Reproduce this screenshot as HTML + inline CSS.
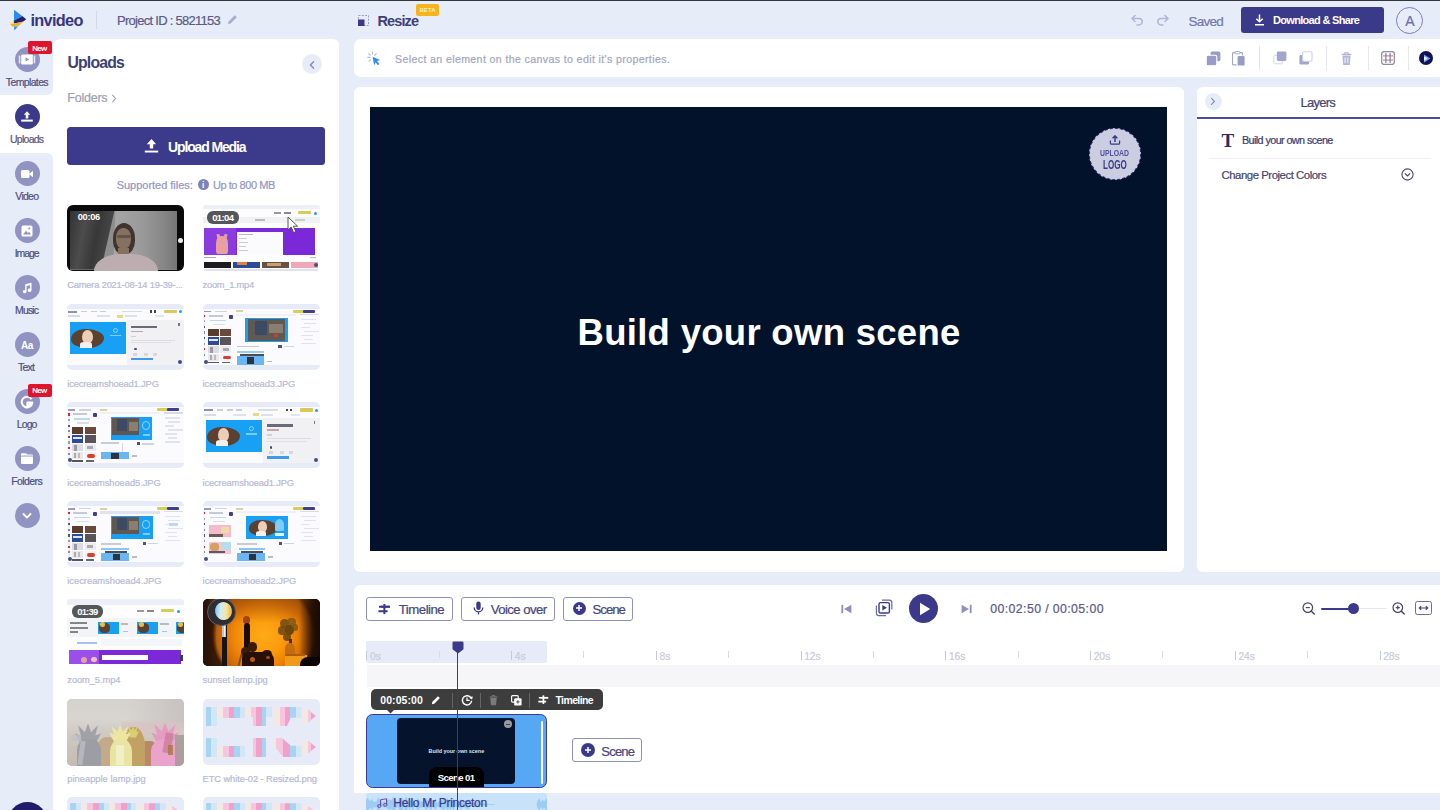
<!DOCTYPE html>
<html><head><meta charset="utf-8">
<style>
*{box-sizing:border-box;margin:0;padding:0}
html,body{width:1440px;height:810px;overflow:hidden}
body{background:#e7edf8;font-family:"Liberation Sans",sans-serif;position:relative;color:#3b3b6d}
.a{position:absolute}
.t{position:absolute;white-space:nowrap;line-height:1}
</style></head><body>
<!-- header -->
<div class="a" style="left:0px;top:0px;width:1440px;height:1.2px;background:#34343c;"></div>
<svg class="a" style="left:9px;top:8px;" width="18" height="24" viewBox="0 0 18 24"><polygon points="5,1.7 13.8,8.4 5,12.6" fill="#2a8cf4"/>
<polygon points="4.6,12.8 13.6,8.2 17.2,11.2 14,13.8 5,15.6" fill="#25206a"/>
<polygon points="0.8,14.6 5,13.4 5,17.6 1,17" fill="#f1e08a"/>
<polygon points="1.4,16.6 14.2,13.6 9,18.6 3.4,18.4" fill="#eab02c"/>
<polygon points="5,18.4 8.8,18.8 5.3,22.6" fill="#2f8df0"/></svg>
<div class="t" style="left:30.40px;top:12.15px;font-size:16.3px;color:#37367f;letter-spacing:-0.653px;font-weight:bold;">invideo</div>
<div class="a" style="left:96px;top:11px;width:1px;height:18px;background:#d3d8e8;"></div>
<div class="t" style="left:117.00px;top:14.30px;font-size:13px;color:#5b5b86;letter-spacing:-0.721px;-webkit-text-stroke:0.22px;">Project ID : 5821153</div>
<svg class="a" style="left:227px;top:14px;" width="11" height="11" viewBox="0 0 11 11"><path d="M1 10 L1.6 7.4 L7.8 1.2 L9.8 3.2 L3.6 9.4 Z" fill="#a9acd0"/></svg>
<svg class="a" style="left:358px;top:14.5px;" width="11" height="11" viewBox="0 0 11 11"><rect x="0.5" y="0.5" width="10" height="10" fill="none" stroke="#9a9dc6" stroke-width="1" stroke-dasharray="2 1.3"/><rect x="0" y="4.5" width="6.5" height="6.5" fill="#3b3a8a"/></svg>
<div class="t" style="left:377.50px;top:14.05px;font-size:14.5px;color:#3f3f76;letter-spacing:-0.899px;font-weight:bold;">Resize</div>
<div class="a" style="left:416px;top:3.5px;width:23px;height:12px;background:#f5b31d;border-radius:2px;"></div>
<div class="t" style="left:419.50px;top:7.30px;font-size:6px;color:#fdeebd;letter-spacing:0.032px;font-weight:bold;">BETA</div>
<svg class="a" style="left:1131px;top:14px;fill:none;stroke:#b1b5d6;stroke-width:1.5;stroke-linecap:round;stroke-linejoin:round" width="13" height="13" viewBox="0 0 13 13"><path d="M4 1.5 L1 4.5 L4 7.5"/><path d="M1.5 4.5 H8 a3.2 3.2 0 0 1 0 6.4 H6"/></svg>
<svg class="a" style="left:1156px;top:14px;fill:none;stroke:#b1b5d6;stroke-width:1.5;stroke-linecap:round;stroke-linejoin:round" width="13" height="13" viewBox="0 0 13 13"><path d="M9 1.5 L12 4.5 L9 7.5"/><path d="M11.5 4.5 H5 a3.2 3.2 0 0 0 0 6.4 H7"/></svg>
<div class="t" style="left:1188.50px;top:15.05px;font-size:13.5px;color:#7477ad;letter-spacing:-0.729px;-webkit-text-stroke:0.22px;">Saved</div>
<div class="a" style="left:1241px;top:7px;width:143px;height:26px;background:#3b3a8a;border-radius:3px;"></div>
<svg class="a" style="left:1254px;top:14px;fill:none;stroke:#fff;stroke-width:1.5" width="11" height="12" viewBox="0 0 11 12"><path d="M5.5 0.5 V7.5 M2.3 4.8 L5.5 7.8 L8.7 4.8 M1 10.8 H10"/></svg>
<div class="t" style="left:1273.00px;top:14.80px;font-size:11px;color:#fff;letter-spacing:-0.689px;font-weight:bold;">Download &amp; Share</div>
<div class="a" style="left:1396.3px;top:7.2px;width:27px;height:27px;background:transparent;border-radius:14px;border:1.3px solid #7b7db5;"></div>
<div class="t" style="left:1405.20px;top:14.30px;font-size:14px;color:#6a6ca8;letter-spacing:0.000px;-webkit-text-stroke:0.22px;">A</div>
<!-- sidebar -->
<div class="a" style="left:0px;top:85px;width:60px;height:80px;background:#fff;"></div>
<div class="a" style="left:0px;top:39px;width:53px;height:56px;background:#e7edf8;border-radius:0 0 6px 0;"></div>
<div class="a" style="left:0px;top:153px;width:53px;height:660px;background:#e7edf8;border-radius:0 6px 0 0;"></div>
<div class="a" style="left:14.5px;top:47.0px;width:25px;height:25px;background:#9193c3;border-radius:13px;"></div>
<svg class="a" style="left:17px;top:52.5px;" width="20" height="14" viewBox="0 0 20 14"><rect x="4.2" y="1.4" width="11.6" height="10" rx="1.2" fill="#fff"/><rect x="1.8" y="2.6" width="1.5" height="7.8" fill="#fff" opacity=".8"/><rect x="16.7" y="2.6" width="1.5" height="7.8" fill="#fff" opacity=".8"/><polygon points="8.6,4.2 8.6,8.6 12.2,6.4" fill="#9193c3"/></svg>
<div class="a" style="left:27.8px;top:41px;width:24px;height:13px;background:#e0142a;border-radius:2px;"></div>
<div class="t" style="left:32.30px;top:44.80px;font-size:8px;color:#fff;letter-spacing:-0.780px;font-weight:bold;">New</div>
<div class="t" style="left:5.80px;top:77.05px;font-size:10.5px;color:#4f4f80;letter-spacing:-0.630px;-webkit-text-stroke:0.22px;">Templates</div>
<div class="a" style="left:14.5px;top:104.05px;width:25px;height:25px;background:#3b3a8a;border-radius:13px;"></div>
<svg class="a" style="left:20px;top:108.55px;" width="14" height="16" viewBox="0 0 14 16"><path d="M7 2.2 L10.2 5.8 H8.3 V9.4 H5.7 V5.8 H3.8 Z" fill="#fff"/><rect x="1.2" y="10.6" width="11.6" height="2" fill="#fff"/></svg>
<div class="t" style="left:10.00px;top:134.05px;font-size:10.5px;color:#5a567c;letter-spacing:-0.742px;-webkit-text-stroke:0.22px;">Uploads</div>
<div class="a" style="left:14.5px;top:161.1px;width:25px;height:25px;background:#9193c3;border-radius:13px;"></div>
<svg class="a" style="left:20px;top:167.6px;" width="14" height="12" viewBox="0 0 14 12"><rect x="1" y="2" width="8.5" height="8" rx="1.5" fill="#fff"/><polygon points="9,6 13,2.8 13,9.2" fill="#fff"/></svg>
<div class="t" style="left:15.30px;top:191.05px;font-size:10.5px;color:#4f4f80;letter-spacing:-0.726px;-webkit-text-stroke:0.22px;">Video</div>
<div class="a" style="left:14.5px;top:218.14999999999998px;width:25px;height:25px;background:#9193c3;border-radius:13px;"></div>
<svg class="a" style="left:21px;top:224.64999999999998px;" width="12" height="12" viewBox="0 0 12 12"><rect x="0.5" y="0.5" width="11" height="11" rx="1.5" fill="#fff"/><polygon points="2,9.5 5,5.8 7,8 8.2,6.8 10,9.5" fill="#9193c3"/><circle cx="8.3" cy="3.6" r="1" fill="#9193c3"/></svg>
<div class="t" style="left:14.70px;top:248.05px;font-size:10.5px;color:#4f4f80;letter-spacing:-1.085px;-webkit-text-stroke:0.22px;">Image</div>
<div class="a" style="left:14.5px;top:275.2px;width:25px;height:25px;background:#9193c3;border-radius:13px;"></div>
<svg class="a" style="left:21px;top:281.7px;" width="12" height="12" viewBox="0 0 12 12"><path d="M4.2 2.2 L10.5 0.8 V8.2 a1.9 1.7 0 1 1 -1.4 -1.6 V3.2 L5.6 4 V9.6 a1.9 1.7 0 1 1 -1.4 -1.6 Z" fill="#fff"/></svg>
<div class="t" style="left:15.10px;top:305.05px;font-size:10.5px;color:#4f4f80;letter-spacing:-0.871px;-webkit-text-stroke:0.22px;">Music</div>
<div class="a" style="left:14.5px;top:332.25px;width:25px;height:25px;background:#9193c3;border-radius:13px;"></div>
<div class="t" style="left:21.00px;top:340.80px;font-size:10px;color:#fff;letter-spacing:-0.522px;font-weight:bold;">Aa</div>
<div class="t" style="left:18.00px;top:362.05px;font-size:10.5px;color:#4f4f80;letter-spacing:-0.816px;-webkit-text-stroke:0.22px;">Text</div>
<div class="a" style="left:14.5px;top:389.29999999999995px;width:25px;height:25px;background:#9193c3;border-radius:13px;"></div>
<svg class="a" style="left:20px;top:394.79999999999995px;" width="14" height="14" viewBox="0 0 14 14"><path d="M11.5 4.2 A5.3 5.3 0 1 0 12.3 7.6 H7.4 V12 L12.3 7.6" fill="none" stroke="#fff" stroke-width="2.1" stroke-linejoin="round"/></svg>
<div class="a" style="left:27.8px;top:383.5px;width:24px;height:13px;background:#e0142a;border-radius:2px;"></div>
<div class="t" style="left:32.30px;top:386.80px;font-size:8px;color:#fff;letter-spacing:-0.780px;font-weight:bold;">New</div>
<div class="t" style="left:16.80px;top:419.05px;font-size:10.5px;color:#4f4f80;letter-spacing:-0.902px;-webkit-text-stroke:0.22px;">Logo</div>
<div class="a" style="left:14.5px;top:446.34999999999997px;width:25px;height:25px;background:#9193c3;border-radius:13px;"></div>
<svg class="a" style="left:20px;top:451.84999999999997px;" width="14" height="13" viewBox="0 0 14 13"><path d="M1 2.2 a1 1 0 0 1 1 -1 H6 L7.3 2.6 H12 a1 1 0 0 1 1 1 V11 a1 1 0 0 1 -1 1 H2 a1 1 0 0 1 -1 -1 Z" fill="#fff"/><rect x="1" y="3.6" width="12" height="0.9" fill="#9193c3"/></svg>
<div class="t" style="left:11.30px;top:476.05px;font-size:10.5px;color:#4f4f80;letter-spacing:-0.602px;-webkit-text-stroke:0.22px;">Folders</div>
<div class="a" style="left:14.5px;top:503.4px;width:25px;height:25px;background:#9193c3;border-radius:13px;"></div>
<svg class="a" style="left:21px;top:510.9px;" width="12" height="10" viewBox="0 0 12 10"><path d="M2.5 3 L6 6.6 L9.5 3" fill="none" stroke="#fff" stroke-width="1.9" stroke-linecap="round" stroke-linejoin="round"/></svg>
<div class="a" style="left:7.9px;top:801.8px;width:39.4px;height:39.4px;background:#1f1c6c;border-radius:20px;"></div>
<!-- panel -->
<div class="a" style="left:53px;top:38.7px;width:286px;height:780px;background:#fff;border-radius:8px 6px 0 0;"></div>
<div class="t" style="left:67.50px;top:54.90px;font-size:15.8px;color:#3f3f74;letter-spacing:-0.849px;font-weight:bold;">Uploads</div>
<div class="a" style="left:302px;top:54px;width:20px;height:20px;background:#e7edf8;border-radius:10px;"></div>
<svg class="a" style="left:308px;top:59.5px;" width="8" height="10" viewBox="0 0 8 10"><path d="M5.6 1.8 L2.4 5 L5.6 8.2" fill="none" stroke="#8a8db8" stroke-width="1.5" stroke-linecap="round" stroke-linejoin="round"/></svg>
<div class="t" style="left:67.30px;top:92.05px;font-size:12.5px;color:#9d9fb2;letter-spacing:-0.228px;-webkit-text-stroke:0.22px;">Folders</div>
<svg class="a" style="left:110.5px;top:94px;" width="6" height="9" viewBox="0 0 6 9"><path d="M1.5 1.2 L4.6 4.5 L1.5 7.8" fill="none" stroke="#a6a8ba" stroke-width="1.1" stroke-linecap="round" stroke-linejoin="round"/></svg>
<div class="a" style="left:67px;top:127.3px;width:258px;height:37.6px;background:#3c3a8b;border-radius:3.5px;"></div>
<svg class="a" style="left:144px;top:138px;" width="15" height="16" viewBox="0 0 15 16"><path d="M7.5 1 L12.2 6.3 H9.2 V10.4 H5.8 V6.3 H2.8 Z" fill="#fff"/><rect x="0.8" y="12.6" width="13.4" height="1.9" fill="#fff"/></svg>
<div class="t" style="left:168.00px;top:140.30px;font-size:14px;color:#fff;letter-spacing:-1.131px;font-weight:bold;">Upload Media</div>
<div class="t" style="left:116.70px;top:179.80px;font-size:11px;color:#9496c4;letter-spacing:-0.022px;-webkit-text-stroke:0.22px;">Supported files:</div>
<div class="a" style="left:197.5px;top:179px;width:11px;height:11px;background:#7f81b8;border-radius:6px;"></div>
<div class="t" style="left:202.10px;top:181.05px;font-size:8.5px;color:#fff;letter-spacing:0.000px;font-weight:bold;">i</div>
<div class="t" style="left:213.00px;top:179.80px;font-size:11px;color:#9496c4;letter-spacing:-0.457px;-webkit-text-stroke:0.22px;">Up to 800 MB</div>
<div class="a" style="left:67px;top:205.0px;width:117px;height:66px;background:#0a0a0a;border-radius:6px;overflow:hidden"><div style="position:absolute;left:0;top:0;right:0;bottom:0;filter:blur(0.55px)"><div class="a" style="left:2.5px;top:5.5px;width:107.5px;height:59px;background:#8e8e8e;"></div><div class="a" style="left:2.5px;top:5.5px;width:45px;height:59px;background:#4a4a4a;background:linear-gradient(100deg,#333 0%,#4c4c4c 30%,#383838 55%,#464646 80%,#6a6a6a 100%);clip-path:polygon(0 0,100% 0,70% 100%,0 100%);"></div><div class="a" style="left:46px;top:5.5px;width:64px;height:59px;background:#a2a2a2;background:linear-gradient(90deg,#a6a6a6,#9a9a9a 45%,#868686 80%,#767676);clip-path:polygon(4% 0,100% 0,100% 100%,0 100%);"></div><div class="a" style="left:45.5px;top:18px;width:22px;height:31px;background:#40342e;border-radius:50% 50% 42% 42%;"></div><div class="a" style="left:49px;top:23px;width:15px;height:21px;background:#86705f;border-radius:45%;"></div><div class="a" style="left:49.5px;top:29.5px;width:14px;height:3.2px;background:#4a3c38;border-radius:2px;opacity:.55;"></div><div class="a" style="left:51px;top:43px;width:11px;height:8px;background:#86705f;"></div><div class="a" style="left:27px;top:49px;width:64px;height:20px;background:#bcaeb0;border-radius:42% 42% 0 0/85% 85% 0 0;"></div><div class="a" style="left:110.8px;top:32.8px;width:5px;height:5px;background:#ececec;border-radius:3px;"></div></div></div>
<div class="a" style="left:202.5px;top:205.0px;width:117px;height:66px;background:#fff;border-radius:3px;overflow:hidden"><div style="position:absolute;left:0;top:0;right:0;bottom:0;filter:blur(0.55px)"><div class="a" style="left:0px;top:0px;width:117px;height:66px;background:#fdfdfe;"></div><div class="a" style="left:0px;top:0px;width:117px;height:4px;background:#eceff7;"></div><div class="a" style="left:71px;top:7px;width:7px;height:1.5px;background:#999;"></div><div class="a" style="left:81px;top:7px;width:7px;height:1.5px;background:#888;"></div><div class="a" style="left:95px;top:6px;width:13px;height:3px;background:#d9cd55;border-radius:1px;"></div><div class="a" style="left:111px;top:6.5px;width:3px;height:3px;background:#18a0f5;border-radius:2px;"></div><div class="a" style="left:0px;top:12px;width:117px;height:6px;background:#f1f1f4;"></div><div class="a" style="left:52px;top:14px;width:10px;height:1.5px;background:#bbb;"></div><div class="a" style="left:92px;top:14px;width:10px;height:1.5px;background:#ccc;"></div><div class="a" style="left:1px;top:23px;width:111px;height:26.5px;background:#7a28d8;"></div><div class="a" style="left:1px;top:23px;width:32px;height:26.5px;background:#8a3ce0;"></div><div class="a" style="left:34px;top:27px;width:46px;height:22.5px;background:#fbfbfd;"></div><div class="a" style="left:36px;top:29px;width:14px;height:1.3px;background:#bbb;"></div><div class="a" style="left:36px;top:33px;width:8px;height:1.2px;background:#ccc;"></div><div class="a" style="left:36px;top:37px;width:9px;height:1.2px;background:#ccc;"></div><div class="a" style="left:36px;top:41px;width:7px;height:1.2px;background:#ccc;"></div><div class="a" style="left:36px;top:45px;width:9px;height:1.2px;background:#ccc;"></div><div class="a" style="left:13px;top:31px;width:12px;height:18px;background:#e8a0a0;border-radius:40% 40% 20% 20%;"></div><div class="a" style="left:14px;top:29px;width:3px;height:5px;background:#e8a0a0;transform:rotate(-15deg);"></div><div class="a" style="left:21px;top:29px;width:3px;height:5px;background:#e8a0a0;transform:rotate(15deg);"></div><div class="a" style="left:1px;top:52px;width:12px;height:1.3px;background:#aaa;"></div><div class="a" style="left:107px;top:52px;width:6px;height:1.3px;background:#bbb;"></div><div class="a" style="left:1px;top:57px;width:27px;height:6px;background:#1c1c1e;"></div><div class="a" style="left:30px;top:57px;width:27px;height:6px;background:#2a4a9a;"></div><div class="a" style="left:34px;top:57px;width:10px;height:3px;background:#e0803a;"></div><div class="a" style="left:59px;top:57px;width:27px;height:6px;background:#6a5040;"></div><div class="a" style="left:64px;top:58px;width:14px;height:3px;background:#c8a070;"></div><div class="a" style="left:88px;top:57px;width:27px;height:6px;background:#f0a8b8;"></div><div class="a" style="left:111px;top:58px;width:4px;height:4px;background:#4a4a86;border-radius:2px;"></div><div class="a" style="left:1px;top:63.5px;width:114px;height:2px;background:#e0e3ee;"></div><svg class="a" style="left:84px;top:11px" width="12" height="18" viewBox="0 0 12 18"><path d="M1 1 L1 14 L4.2 11 L6.6 16.6 L8.8 15.6 L6.4 10.2 L10.6 10.2 Z" fill="#fff" stroke="#444" stroke-width="0.9"/></svg></div></div>
<div class="t" style="left:77.80px;top:212.70px;font-size:9.2px;color:#fff;letter-spacing:-0.297px;font-weight:bold;">00:06</div>
<div class="a" style="left:207px;top:210.5px;width:32px;height:13.5px;background:#55565a;border-radius:6px;"></div>
<div class="t" style="left:212.20px;top:213.05px;font-size:9.5px;color:#fff;letter-spacing:-0.599px;font-weight:bold;">01:04</div>
<div class="a" style="left:67px;top:303.7px;width:117px;height:66px;background:#e6ebf7;border-radius:5px;overflow:hidden"><div style="position:absolute;left:0;top:0;right:0;bottom:0;filter:blur(0.55px)"><div class="a" style="left:0px;top:5px;width:117px;height:56px;background:#fbfbfd;"></div><div class="a" style="left:1px;top:7px;width:9px;height:2px;background:#8f93ad;"></div><div class="a" style="left:14px;top:7px;width:6px;height:1.5px;background:#c9ccda;"></div><div class="a" style="left:24px;top:7px;width:6px;height:1.5px;background:#c9ccda;"></div><div class="a" style="left:33px;top:7px;width:6px;height:1.5px;background:#c9ccda;"></div><div class="a" style="left:55px;top:7px;width:20px;height:1.5px;background:#dadce6;"></div><div class="a" style="left:83px;top:6.5px;width:2px;height:2.5px;background:#444;"></div><div class="a" style="left:87px;top:6.5px;width:2px;height:2.5px;background:#444;"></div><div class="a" style="left:97px;top:6px;width:13px;height:3.5px;background:#d9c95a;border-radius:1px;"></div><div class="a" style="left:112px;top:6.5px;width:3px;height:3px;background:#18a0f5;border-radius:2px;"></div><div class="a" style="left:1px;top:11.5px;width:12px;height:2px;background:#d9dbe5;"></div><div class="a" style="left:30px;top:11.5px;width:13px;height:2px;background:#dfe1ea;"></div><div class="a" style="left:50px;top:11px;width:6px;height:3px;background:#e4dc84;"></div><div class="a" style="left:58px;top:11.5px;width:12px;height:2px;background:#dfe1ea;"></div><div class="a" style="left:88px;top:11.5px;width:9px;height:2px;background:#e3e5ec;"></div><div class="a" style="left:3px;top:18px;width:56px;height:32px;background:#18a0f5;"></div><div class="a" style="left:4px;top:25.0px;width:33.0px;height:19.0px;background:#5d4130;border-radius:45% 55% 50% 50%/55% 50% 55% 45%;"></div><div class="a" style="left:15.0px;top:26.0px;width:11.0px;height:14.0px;background:#eccdb8;border-radius:50%;"></div><div class="a" style="left:13.0px;top:38.0px;width:12.0px;height:6.0px;background:#f3efee;border-radius:40% 40% 0 0;"></div><div class="a" style="left:46px;top:24px;width:5px;height:5px;background:transparent;border-radius:3px;border:1px solid #8fd3fb;"></div><div class="a" style="left:43px;top:31px;width:11px;height:1.2px;background:#7fccfa;"></div><div class="a" style="left:60px;top:16px;width:57px;height:45px;background:#f1f1f4;"></div><div class="a" style="left:64px;top:22px;width:26px;height:2.2px;background:#6a6a78;"></div><div class="a" style="left:64px;top:27px;width:12px;height:1.5px;background:#c4a8a8;"></div><div class="a" style="left:64px;top:32px;width:5px;height:1.3px;background:#d0d0d8;"></div><div class="a" style="left:64px;top:36px;width:44px;height:1px;background:#dcdce2;"></div><div class="a" style="left:64px;top:38.5px;width:40px;height:1px;background:#e0e0e6;"></div><div class="a" style="left:67px;top:44px;width:2.5px;height:2.5px;background:#4a4a7a;border-radius:2px;"></div><div class="a" style="left:66px;top:49px;width:4px;height:3px;background:#d4d4dc;"></div><div class="a" style="left:77px;top:49px;width:4px;height:3px;background:#d8d8dc;"></div><div class="a" style="left:86px;top:49px;width:4px;height:3px;background:#d8d8dc;"></div><div class="a" style="left:64px;top:54px;width:22px;height:2.8px;background:#3e9bea;"></div><div class="a" style="left:111px;top:56px;width:4px;height:4px;background:#4a4a86;border-radius:2px;"></div><div class="a" style="left:111px;top:19px;width:1.5px;height:3px;background:#777;"></div></div></div>
<div class="a" style="left:202.5px;top:303.7px;width:117px;height:66px;background:#e6ebf7;border-radius:5px;overflow:hidden"><div style="position:absolute;left:0;top:0;right:0;bottom:0;filter:blur(0.55px)"><div class="a" style="left:0px;top:5px;width:117px;height:56px;background:#fbfbfd;"></div><div class="a" style="left:1px;top:7px;width:7px;height:1.6px;background:#9a9db8;"></div><div class="a" style="left:12px;top:7px;width:12px;height:1.4px;background:#cfd2e0;"></div><div class="a" style="left:33px;top:6.5px;width:7px;height:2px;background:#d8d4a0;"></div><div class="a" style="left:90px;top:6px;width:11px;height:3px;background:#d9cd55;border-radius:1px;"></div><div class="a" style="left:100px;top:6px;width:12px;height:3px;background:#3e3f8e;border-radius:1px;"></div><div class="a" style="left:1px;top:9.5px;width:1.6px;height:46px;background:#eceef6;"></div><div class="a" style="left:1px;top:11.0px;width:1.6px;height:2.2px;background:#d23;"></div><div class="a" style="left:1px;top:16.6px;width:1.6px;height:2.2px;background:#9aa;"></div><div class="a" style="left:1px;top:22.2px;width:1.6px;height:2.2px;background:#556;"></div><div class="a" style="left:1px;top:27.799999999999997px;width:1.6px;height:2.2px;background:#88a;"></div><div class="a" style="left:1px;top:33.4px;width:1.6px;height:2.2px;background:#557;"></div><div class="a" style="left:1px;top:39.0px;width:1.6px;height:2.2px;background:#99b;"></div><div class="a" style="left:1px;top:44.599999999999994px;width:1.6px;height:2.2px;background:#c33;"></div><div class="a" style="left:1px;top:50.199999999999996px;width:1.6px;height:2.2px;background:#88a;"></div><div class="a" style="left:1.2px;top:56px;width:4px;height:4px;background:#4a4a86;border-radius:2px;"></div><div class="a" style="left:6px;top:11px;width:14px;height:2px;background:#c5c8dc;"></div><div class="a" style="left:26px;top:11px;width:4px;height:4px;background:#3e3f8e;border-radius:1px;"></div><div class="a" style="left:7px;top:16px;width:16px;height:1.3px;background:#b8daf5;"></div><div class="a" style="left:10px;top:20px;width:12px;height:1.2px;background:#dadde8;"></div><div class="a" style="left:5px;top:25px;width:11px;height:7px;background:#5b3c2c;"></div><div class="a" style="left:17.5px;top:25px;width:11px;height:7px;background:#6a4a3c;"></div><div class="a" style="left:5px;top:33px;width:11px;height:8px;background:#2d4a9a;"></div><div class="a" style="left:6px;top:35px;width:9px;height:2px;background:#dfe6f5;"></div><div class="a" style="left:17.5px;top:33px;width:11px;height:8px;background:#5a5458;"></div><div class="a" style="left:5px;top:42px;width:11px;height:7px;background:#dcdde3;"></div><div class="a" style="left:7px;top:43px;width:3px;height:6px;background:#9a9aa0;"></div><div class="a" style="left:17.5px;top:42px;width:11px;height:7px;background:#ececf0;"></div><div class="a" style="left:20px;top:44px;width:6px;height:3px;background:#aaa;"></div><div class="a" style="left:5px;top:50px;width:11px;height:7px;background:#e8e8ee;"></div><div class="a" style="left:7px;top:51px;width:2px;height:5px;background:#aaa;"></div><div class="a" style="left:11px;top:51px;width:2px;height:5px;background:#bbb;"></div><div class="a" style="left:17.5px;top:50px;width:11px;height:7px;background:#f2f2f4;"></div><div class="a" style="left:20px;top:52px;width:8px;height:3.5px;background:#d6402c;border-radius:2px;"></div><div class="a" style="left:5px;top:58px;width:11px;height:1.5px;background:#555;"></div><div class="a" style="left:19px;top:58px;width:8px;height:1.5px;background:#666;"></div><div class="a" style="left:33px;top:10px;width:60px;height:2px;background:#f0f1f6;"></div><div class="a" style="left:42px;top:14px;width:43px;height:24px;background:#18a0f5;"></div><div class="a" style="left:45px;top:15px;width:37px;height:22px;background:#5e5a52;"></div><div class="a" style="left:52px;top:17px;width:12px;height:14px;background:#3d4a66;"></div><div class="a" style="left:66px;top:20px;width:14px;height:9px;background:#8a7e70;"></div><div class="a" style="left:71px;top:30px;width:4px;height:3px;background:#c84030;"></div><div class="a" style="left:34px;top:42px;width:22px;height:1.5px;background:#c5c8d6;"></div><div class="a" style="left:75px;top:41px;width:4px;height:3px;background:#556;"></div><div class="a" style="left:81px;top:42px;width:10px;height:1.2px;background:#d0d3de;"></div><div class="a" style="left:34px;top:47px;width:27px;height:2.3px;background:#9acbf2;"></div><div class="a" style="left:37px;top:50px;width:24px;height:3px;background:#4a4e58;"></div><div class="a" style="left:34px;top:52px;width:27px;height:9px;background:#6ab6f2;"></div><div class="a" style="left:44px;top:53px;width:7px;height:7px;background:#2c3442;"></div><div class="a" style="left:64px;top:57px;width:5px;height:1.5px;background:#bbb;"></div><div class="a" style="left:97px;top:10px;width:19px;height:1.4px;background:#d9dce8;"></div><div class="a" style="left:98px;top:15px;width:15px;height:1.2px;background:#e1e3ee;"></div><div class="a" style="left:101px;top:19px;width:12px;height:1.2px;background:#e1e3ee;"></div><div class="a" style="left:98px;top:23px;width:9px;height:1.2px;background:#e1e3ee;"></div><div class="a" style="left:101px;top:27px;width:15px;height:1.2px;background:#e1e3ee;"></div><div class="a" style="left:98px;top:31px;width:12px;height:1.2px;background:#e1e3ee;"></div><div class="a" style="left:101px;top:35px;width:9px;height:1.2px;background:#e1e3ee;"></div><div class="a" style="left:98px;top:39px;width:15px;height:1.2px;background:#e1e3ee;"></div></div></div>
<div class="a" style="left:67px;top:402.4px;width:117px;height:66px;background:#e6ebf7;border-radius:5px;overflow:hidden"><div style="position:absolute;left:0;top:0;right:0;bottom:0;filter:blur(0.55px)"><div class="a" style="left:0px;top:5px;width:117px;height:56px;background:#fbfbfd;"></div><div class="a" style="left:1px;top:7px;width:7px;height:1.6px;background:#9a9db8;"></div><div class="a" style="left:12px;top:7px;width:12px;height:1.4px;background:#cfd2e0;"></div><div class="a" style="left:33px;top:6.5px;width:7px;height:2px;background:#d8d4a0;"></div><div class="a" style="left:90px;top:6px;width:11px;height:3px;background:#d9cd55;border-radius:1px;"></div><div class="a" style="left:100px;top:6px;width:12px;height:3px;background:#3e3f8e;border-radius:1px;"></div><div class="a" style="left:1px;top:9.5px;width:1.6px;height:46px;background:#eceef6;"></div><div class="a" style="left:1px;top:11.0px;width:1.6px;height:2.2px;background:#d23;"></div><div class="a" style="left:1px;top:16.6px;width:1.6px;height:2.2px;background:#9aa;"></div><div class="a" style="left:1px;top:22.2px;width:1.6px;height:2.2px;background:#556;"></div><div class="a" style="left:1px;top:27.799999999999997px;width:1.6px;height:2.2px;background:#88a;"></div><div class="a" style="left:1px;top:33.4px;width:1.6px;height:2.2px;background:#557;"></div><div class="a" style="left:1px;top:39.0px;width:1.6px;height:2.2px;background:#99b;"></div><div class="a" style="left:1px;top:44.599999999999994px;width:1.6px;height:2.2px;background:#c33;"></div><div class="a" style="left:1px;top:50.199999999999996px;width:1.6px;height:2.2px;background:#88a;"></div><div class="a" style="left:1.2px;top:56px;width:4px;height:4px;background:#4a4a86;border-radius:2px;"></div><div class="a" style="left:6px;top:11px;width:14px;height:2px;background:#c5c8dc;"></div><div class="a" style="left:26px;top:11px;width:4px;height:4px;background:#3e3f8e;border-radius:1px;"></div><div class="a" style="left:7px;top:16px;width:16px;height:1.3px;background:#b8daf5;"></div><div class="a" style="left:10px;top:20px;width:12px;height:1.2px;background:#dadde8;"></div><div class="a" style="left:5px;top:25px;width:11px;height:7px;background:#5b3c2c;"></div><div class="a" style="left:17.5px;top:25px;width:11px;height:7px;background:#6a4a3c;"></div><div class="a" style="left:5px;top:33px;width:11px;height:8px;background:#2d4a9a;"></div><div class="a" style="left:6px;top:35px;width:9px;height:2px;background:#dfe6f5;"></div><div class="a" style="left:17.5px;top:33px;width:11px;height:8px;background:#5a5458;"></div><div class="a" style="left:5px;top:42px;width:11px;height:7px;background:#dcdde3;"></div><div class="a" style="left:7px;top:43px;width:3px;height:6px;background:#9a9aa0;"></div><div class="a" style="left:17.5px;top:42px;width:11px;height:7px;background:#ececf0;"></div><div class="a" style="left:20px;top:44px;width:6px;height:3px;background:#aaa;"></div><div class="a" style="left:5px;top:50px;width:11px;height:7px;background:#e8e8ee;"></div><div class="a" style="left:7px;top:51px;width:2px;height:5px;background:#aaa;"></div><div class="a" style="left:11px;top:51px;width:2px;height:5px;background:#bbb;"></div><div class="a" style="left:17.5px;top:50px;width:11px;height:7px;background:#f2f2f4;"></div><div class="a" style="left:20px;top:52px;width:8px;height:3.5px;background:#d6402c;border-radius:2px;"></div><div class="a" style="left:5px;top:58px;width:11px;height:1.5px;background:#555;"></div><div class="a" style="left:19px;top:58px;width:8px;height:1.5px;background:#666;"></div><div class="a" style="left:33px;top:10px;width:60px;height:2px;background:#f0f1f6;"></div><div class="a" style="left:44px;top:14.5px;width:41px;height:23px;background:#18a0f5;"></div><div class="a" style="left:45px;top:15.5px;width:27px;height:17px;background:#5e5850;"></div><div class="a" style="left:50px;top:16.5px;width:10px;height:12px;background:#3d4a66;"></div><div class="a" style="left:62px;top:19.5px;width:9px;height:9px;background:#8a7e70;"></div><div class="a" style="left:75px;top:18.5px;width:8px;height:9px;background:transparent;border-radius:5px;border:1.2px solid #8fd3fb;"></div><div class="a" style="left:76px;top:31.5px;width:7px;height:2px;background:#7fccfa;"></div><div class="a" style="left:34px;top:40px;width:18px;height:1.5px;background:#c8cbd8;"></div><div class="a" style="left:70px;top:40px;width:3px;height:3px;background:#556;"></div><div class="a" style="left:75px;top:41px;width:12px;height:1.2px;background:#d0d3de;"></div><div class="a" style="left:55px;top:41px;width:1px;height:12px;background:#d5d7e2;"></div><div class="a" style="left:34px;top:50px;width:28px;height:7px;background:#6ab6f2;"></div><div class="a" style="left:44px;top:51px;width:8px;height:6px;background:#2c3442;"></div><div class="a" style="left:65px;top:53px;width:5px;height:1.5px;background:#bbb;"></div><div class="a" style="left:97px;top:10px;width:19px;height:1.4px;background:#d9dce8;"></div><div class="a" style="left:98px;top:15px;width:15px;height:1.2px;background:#e1e3ee;"></div><div class="a" style="left:101px;top:19px;width:12px;height:1.2px;background:#e1e3ee;"></div><div class="a" style="left:98px;top:23px;width:9px;height:1.2px;background:#e1e3ee;"></div><div class="a" style="left:101px;top:27px;width:15px;height:1.2px;background:#e1e3ee;"></div><div class="a" style="left:98px;top:31px;width:12px;height:1.2px;background:#e1e3ee;"></div><div class="a" style="left:101px;top:35px;width:9px;height:1.2px;background:#e1e3ee;"></div><div class="a" style="left:98px;top:39px;width:15px;height:1.2px;background:#e1e3ee;"></div></div></div>
<div class="a" style="left:202.5px;top:402.4px;width:117px;height:66px;background:#e6ebf7;border-radius:5px;overflow:hidden"><div style="position:absolute;left:0;top:0;right:0;bottom:0;filter:blur(0.55px)"><div class="a" style="left:0px;top:5px;width:117px;height:56px;background:#fbfbfd;"></div><div class="a" style="left:1px;top:7px;width:9px;height:2px;background:#8f93ad;"></div><div class="a" style="left:14px;top:7px;width:6px;height:1.5px;background:#c9ccda;"></div><div class="a" style="left:24px;top:7px;width:6px;height:1.5px;background:#c9ccda;"></div><div class="a" style="left:33px;top:7px;width:6px;height:1.5px;background:#c9ccda;"></div><div class="a" style="left:55px;top:7px;width:20px;height:1.5px;background:#dadce6;"></div><div class="a" style="left:83px;top:6.5px;width:2px;height:2.5px;background:#444;"></div><div class="a" style="left:87px;top:6.5px;width:2px;height:2.5px;background:#444;"></div><div class="a" style="left:97px;top:6px;width:13px;height:3.5px;background:#d9c95a;border-radius:1px;"></div><div class="a" style="left:112px;top:6.5px;width:3px;height:3px;background:#18a0f5;border-radius:2px;"></div><div class="a" style="left:1px;top:11.5px;width:12px;height:2px;background:#d9dbe5;"></div><div class="a" style="left:30px;top:11.5px;width:13px;height:2px;background:#dfe1ea;"></div><div class="a" style="left:50px;top:11px;width:6px;height:3px;background:#e4dc84;"></div><div class="a" style="left:58px;top:11.5px;width:12px;height:2px;background:#dfe1ea;"></div><div class="a" style="left:88px;top:11.5px;width:9px;height:2px;background:#e3e5ec;"></div><div class="a" style="left:3px;top:18px;width:56px;height:32px;background:#18a0f5;"></div><div class="a" style="left:4px;top:25.0px;width:33.0px;height:19.0px;background:#5d4130;border-radius:45% 55% 50% 50%/55% 50% 55% 45%;"></div><div class="a" style="left:15.0px;top:26.0px;width:11.0px;height:14.0px;background:#eccdb8;border-radius:50%;"></div><div class="a" style="left:13.0px;top:38.0px;width:12.0px;height:6.0px;background:#f3efee;border-radius:40% 40% 0 0;"></div><div class="a" style="left:46px;top:24px;width:5px;height:5px;background:transparent;border-radius:3px;border:1px solid #8fd3fb;"></div><div class="a" style="left:43px;top:31px;width:11px;height:1.2px;background:#7fccfa;"></div><div class="a" style="left:60px;top:16px;width:57px;height:45px;background:#f1f1f4;"></div><div class="a" style="left:64px;top:22px;width:26px;height:2.2px;background:#6a6a78;"></div><div class="a" style="left:64px;top:27px;width:12px;height:1.5px;background:#c4a8a8;"></div><div class="a" style="left:64px;top:32px;width:5px;height:1.3px;background:#d0d0d8;"></div><div class="a" style="left:64px;top:36px;width:44px;height:1px;background:#dcdce2;"></div><div class="a" style="left:64px;top:38.5px;width:40px;height:1px;background:#e0e0e6;"></div><div class="a" style="left:67px;top:44px;width:2.5px;height:2.5px;background:#4a4a7a;border-radius:2px;"></div><div class="a" style="left:66px;top:49px;width:4px;height:3px;background:#d4d4dc;"></div><div class="a" style="left:77px;top:49px;width:4px;height:3px;background:#d8d8dc;"></div><div class="a" style="left:86px;top:49px;width:4px;height:3px;background:#d8d8dc;"></div><div class="a" style="left:64px;top:54px;width:22px;height:2.8px;background:#3e9bea;"></div><div class="a" style="left:111px;top:56px;width:4px;height:4px;background:#4a4a86;border-radius:2px;"></div><div class="a" style="left:111px;top:19px;width:1.5px;height:3px;background:#777;"></div></div></div>
<div class="a" style="left:67px;top:501.1px;width:117px;height:66px;background:#e6ebf7;border-radius:5px;overflow:hidden"><div style="position:absolute;left:0;top:0;right:0;bottom:0;filter:blur(0.55px)"><div class="a" style="left:0px;top:5px;width:117px;height:56px;background:#fbfbfd;"></div><div class="a" style="left:1px;top:7px;width:7px;height:1.6px;background:#9a9db8;"></div><div class="a" style="left:12px;top:7px;width:12px;height:1.4px;background:#cfd2e0;"></div><div class="a" style="left:33px;top:6.5px;width:7px;height:2px;background:#d8d4a0;"></div><div class="a" style="left:90px;top:6px;width:11px;height:3px;background:#d9cd55;border-radius:1px;"></div><div class="a" style="left:100px;top:6px;width:12px;height:3px;background:#3e3f8e;border-radius:1px;"></div><div class="a" style="left:1px;top:9.5px;width:1.6px;height:46px;background:#eceef6;"></div><div class="a" style="left:1px;top:11.0px;width:1.6px;height:2.2px;background:#d23;"></div><div class="a" style="left:1px;top:16.6px;width:1.6px;height:2.2px;background:#9aa;"></div><div class="a" style="left:1px;top:22.2px;width:1.6px;height:2.2px;background:#556;"></div><div class="a" style="left:1px;top:27.799999999999997px;width:1.6px;height:2.2px;background:#88a;"></div><div class="a" style="left:1px;top:33.4px;width:1.6px;height:2.2px;background:#557;"></div><div class="a" style="left:1px;top:39.0px;width:1.6px;height:2.2px;background:#99b;"></div><div class="a" style="left:1px;top:44.599999999999994px;width:1.6px;height:2.2px;background:#c33;"></div><div class="a" style="left:1px;top:50.199999999999996px;width:1.6px;height:2.2px;background:#88a;"></div><div class="a" style="left:1.2px;top:56px;width:4px;height:4px;background:#4a4a86;border-radius:2px;"></div><div class="a" style="left:6px;top:11px;width:14px;height:2px;background:#c5c8dc;"></div><div class="a" style="left:26px;top:11px;width:4px;height:4px;background:#3e3f8e;border-radius:1px;"></div><div class="a" style="left:7px;top:16px;width:16px;height:1.3px;background:#b8daf5;"></div><div class="a" style="left:10px;top:20px;width:12px;height:1.2px;background:#dadde8;"></div><div class="a" style="left:5px;top:25px;width:11px;height:7px;background:#5b3c2c;"></div><div class="a" style="left:17.5px;top:25px;width:11px;height:7px;background:#6a4a3c;"></div><div class="a" style="left:5px;top:33px;width:11px;height:8px;background:#2d4a9a;"></div><div class="a" style="left:6px;top:35px;width:9px;height:2px;background:#dfe6f5;"></div><div class="a" style="left:17.5px;top:33px;width:11px;height:8px;background:#5a5458;"></div><div class="a" style="left:5px;top:42px;width:11px;height:7px;background:#dcdde3;"></div><div class="a" style="left:7px;top:43px;width:3px;height:6px;background:#9a9aa0;"></div><div class="a" style="left:17.5px;top:42px;width:11px;height:7px;background:#ececf0;"></div><div class="a" style="left:20px;top:44px;width:6px;height:3px;background:#aaa;"></div><div class="a" style="left:5px;top:50px;width:11px;height:7px;background:#e8e8ee;"></div><div class="a" style="left:7px;top:51px;width:2px;height:5px;background:#aaa;"></div><div class="a" style="left:11px;top:51px;width:2px;height:5px;background:#bbb;"></div><div class="a" style="left:17.5px;top:50px;width:11px;height:7px;background:#f2f2f4;"></div><div class="a" style="left:20px;top:52px;width:8px;height:3.5px;background:#d6402c;border-radius:2px;"></div><div class="a" style="left:5px;top:58px;width:11px;height:1.5px;background:#555;"></div><div class="a" style="left:19px;top:58px;width:8px;height:1.5px;background:#666;"></div><div class="a" style="left:33px;top:10px;width:60px;height:2px;background:#f0f1f6;"></div><div class="a" style="left:33px;top:10px;width:60px;height:3px;background:#dfe3f0;"></div><div class="a" style="left:44px;top:15px;width:42px;height:23px;background:#18a0f5;"></div><div class="a" style="left:45px;top:16px;width:27px;height:17px;background:#5e5850;"></div><div class="a" style="left:50px;top:17px;width:10px;height:12px;background:#3d4a66;"></div><div class="a" style="left:62px;top:20px;width:9px;height:9px;background:#8a7e70;"></div><div class="a" style="left:75px;top:19px;width:8px;height:9px;background:transparent;border-radius:5px;border:1.2px solid #8fd3fb;"></div><div class="a" style="left:76px;top:32px;width:7px;height:2px;background:#7fccfa;"></div><div class="a" style="left:34px;top:42px;width:20px;height:1.5px;background:#c8cbd8;"></div><div class="a" style="left:76px;top:41px;width:3px;height:3px;background:#556;"></div><div class="a" style="left:81px;top:42px;width:10px;height:1.2px;background:#d0d3de;"></div><div class="a" style="left:34px;top:47px;width:28px;height:2.3px;background:#8ec4f0;"></div><div class="a" style="left:38px;top:49.5px;width:22px;height:2.6px;background:#4a4e58;"></div><div class="a" style="left:34px;top:52px;width:28px;height:8px;background:#6ab6f2;"></div><div class="a" style="left:46px;top:53px;width:7px;height:6px;background:#2c3442;"></div><div class="a" style="left:65px;top:55px;width:5px;height:1.5px;background:#bbb;"></div><div class="a" style="left:97px;top:10px;width:19px;height:1.4px;background:#d9dce8;"></div><div class="a" style="left:98px;top:15px;width:15px;height:1.2px;background:#e1e3ee;"></div><div class="a" style="left:101px;top:19px;width:12px;height:1.2px;background:#e1e3ee;"></div><div class="a" style="left:98px;top:23px;width:9px;height:1.2px;background:#e1e3ee;"></div><div class="a" style="left:101px;top:27px;width:15px;height:1.2px;background:#e1e3ee;"></div><div class="a" style="left:98px;top:31px;width:12px;height:1.2px;background:#e1e3ee;"></div><div class="a" style="left:101px;top:35px;width:9px;height:1.2px;background:#e1e3ee;"></div><div class="a" style="left:98px;top:39px;width:15px;height:1.2px;background:#e1e3ee;"></div><div class="a" style="left:102px;top:22px;width:9px;height:3px;background:#bcd8f5;"></div></div></div>
<div class="a" style="left:202.5px;top:501.1px;width:117px;height:66px;background:#e6ebf7;border-radius:5px;overflow:hidden"><div style="position:absolute;left:0;top:0;right:0;bottom:0;filter:blur(0.55px)"><div class="a" style="left:0px;top:5px;width:117px;height:56px;background:#fbfbfd;"></div><div class="a" style="left:1px;top:7px;width:7px;height:1.6px;background:#9a9db8;"></div><div class="a" style="left:12px;top:7px;width:12px;height:1.4px;background:#cfd2e0;"></div><div class="a" style="left:33px;top:6.5px;width:7px;height:2px;background:#d8d4a0;"></div><div class="a" style="left:90px;top:6px;width:11px;height:3px;background:#d9cd55;border-radius:1px;"></div><div class="a" style="left:100px;top:6px;width:12px;height:3px;background:#3e3f8e;border-radius:1px;"></div><div class="a" style="left:1px;top:9.5px;width:1.6px;height:46px;background:#eceef6;"></div><div class="a" style="left:1px;top:11.0px;width:1.6px;height:2.2px;background:#d23;"></div><div class="a" style="left:1px;top:16.6px;width:1.6px;height:2.2px;background:#9aa;"></div><div class="a" style="left:1px;top:22.2px;width:1.6px;height:2.2px;background:#556;"></div><div class="a" style="left:1px;top:27.799999999999997px;width:1.6px;height:2.2px;background:#88a;"></div><div class="a" style="left:1px;top:33.4px;width:1.6px;height:2.2px;background:#557;"></div><div class="a" style="left:1px;top:39.0px;width:1.6px;height:2.2px;background:#99b;"></div><div class="a" style="left:1px;top:44.599999999999994px;width:1.6px;height:2.2px;background:#c33;"></div><div class="a" style="left:1px;top:50.199999999999996px;width:1.6px;height:2.2px;background:#88a;"></div><div class="a" style="left:1.2px;top:56px;width:4px;height:4px;background:#4a4a86;border-radius:2px;"></div><div class="a" style="left:6px;top:11px;width:14px;height:2px;background:#c5c8dc;"></div><div class="a" style="left:26px;top:11px;width:4px;height:4px;background:#3e3f8e;border-radius:1px;"></div><div class="a" style="left:7px;top:16px;width:16px;height:1.3px;background:#b8daf5;"></div><div class="a" style="left:10px;top:20px;width:12px;height:1.2px;background:#dadde8;"></div><div class="a" style="left:6px;top:24px;width:22px;height:12px;background:#f3bcc8;"></div><div class="a" style="left:18px;top:26px;width:8px;height:6px;background:#f2d8a8;"></div><div class="a" style="left:6px;top:33px;width:14px;height:2.5px;background:#6a5a5a;"></div><div class="a" style="left:6px;top:40.5px;width:22px;height:12px;background:#f4c8d0;"></div><div class="a" style="left:7px;top:41.5px;width:9px;height:8px;background:#d8a060;border-radius:3px;"></div><div class="a" style="left:18px;top:40.5px;width:10px;height:8px;background:#b8dcf0;"></div><div class="a" style="left:6px;top:49.5px;width:16px;height:2.5px;background:#5a5a6a;"></div><div class="a" style="left:33px;top:10px;width:60px;height:2px;background:#f0f1f6;"></div><div class="a" style="left:43px;top:15px;width:42px;height:23px;background:#18a0f5;"></div><div class="a" style="left:46px;top:18.7px;width:28.05px;height:16.15px;background:#5d4130;border-radius:45% 55% 50% 50%/55% 50% 55% 45%;"></div><div class="a" style="left:55.35px;top:19.55px;width:9.35px;height:11.9px;background:#eccdb8;border-radius:50%;"></div><div class="a" style="left:53.65px;top:29.75px;width:10.2px;height:5.1px;background:#f3efee;border-radius:40% 40% 0 0;"></div><div class="a" style="left:72px;top:18px;width:9px;height:12px;background:#7fccfa;border-radius:50% 50% 10% 10%;"></div><div class="a" style="left:72px;top:32px;width:9px;height:2.5px;background:#dff2fd;"></div><div class="a" style="left:34px;top:42px;width:20px;height:1.5px;background:#c8cbd8;"></div><div class="a" style="left:76px;top:41px;width:3px;height:3px;background:#556;"></div><div class="a" style="left:81px;top:42px;width:10px;height:1.2px;background:#d0d3de;"></div><div class="a" style="left:36px;top:47px;width:26px;height:2.3px;background:#8ec4f0;"></div><div class="a" style="left:38px;top:49.5px;width:22px;height:2.6px;background:#4a4e58;"></div><div class="a" style="left:34px;top:52px;width:28px;height:8px;background:#6ab6f2;"></div><div class="a" style="left:46px;top:53px;width:7px;height:6px;background:#2c3442;"></div><div class="a" style="left:65px;top:55px;width:5px;height:1.5px;background:#bbb;"></div><div class="a" style="left:97px;top:10px;width:19px;height:1.4px;background:#d9dce8;"></div><div class="a" style="left:98px;top:15px;width:15px;height:1.2px;background:#e1e3ee;"></div><div class="a" style="left:101px;top:19px;width:12px;height:1.2px;background:#e1e3ee;"></div><div class="a" style="left:98px;top:23px;width:9px;height:1.2px;background:#e1e3ee;"></div><div class="a" style="left:101px;top:27px;width:15px;height:1.2px;background:#e1e3ee;"></div><div class="a" style="left:98px;top:31px;width:12px;height:1.2px;background:#e1e3ee;"></div><div class="a" style="left:101px;top:35px;width:9px;height:1.2px;background:#e1e3ee;"></div><div class="a" style="left:98px;top:39px;width:15px;height:1.2px;background:#e1e3ee;"></div></div></div>
<div class="a" style="left:67px;top:599.3px;width:117px;height:66px;background:#fff;border-radius:3px;overflow:hidden"><div style="position:absolute;left:0;top:0;right:0;bottom:0;filter:blur(0.55px)"><div class="a" style="left:0px;top:0px;width:117px;height:66px;background:#fdfdfe;"></div><div class="a" style="left:0px;top:0px;width:117px;height:6px;background:#eceff7;"></div><div class="a" style="left:70px;top:11px;width:7px;height:1.5px;background:#999;"></div><div class="a" style="left:80px;top:11px;width:7px;height:1.5px;background:#888;"></div><div class="a" style="left:94px;top:10px;width:13px;height:3px;background:#d9cd55;border-radius:1px;"></div><div class="a" style="left:110px;top:10.5px;width:3px;height:3px;background:#18a0f5;border-radius:2px;"></div><div class="a" style="left:0px;top:19px;width:117px;height:19px;background:#f3f4f8;"></div><div class="a" style="left:3px;top:23.2px;width:17px;height:1.7px;background:#858588;"></div><div class="a" style="left:3px;top:27.7px;width:18px;height:1.7px;background:#858588;"></div><div class="a" style="left:3px;top:32.2px;width:8px;height:1.7px;background:#858588;"></div><div class="a" style="left:31px;top:22.5px;width:21px;height:12px;background:#18a0f5;"></div><div class="a" style="left:32px;top:24px;width:11px;height:10px;background:#5d4130;border-radius:40%;"></div><div class="a" style="left:33px;top:23px;width:5px;height:5px;background:#e8c040;border-radius:3px;"></div><div class="a" style="left:70px;top:22.5px;width:21px;height:12px;background:#18a0f5;"></div><div class="a" style="left:71px;top:24px;width:11px;height:10px;background:#5d4130;border-radius:40%;"></div><div class="a" style="left:72px;top:23px;width:5px;height:5px;background:#e8c040;border-radius:3px;"></div><div class="a" style="left:109px;top:22.5px;width:21px;height:12px;background:#18a0f5;"></div><div class="a" style="left:110px;top:24px;width:11px;height:10px;background:#5d4130;border-radius:40%;"></div><div class="a" style="left:111px;top:23px;width:5px;height:5px;background:#e8c040;border-radius:3px;"></div><div class="a" style="left:54px;top:24px;width:7px;height:1.3px;background:#bbb;"></div><div class="a" style="left:93px;top:24px;width:9px;height:1.3px;background:#bbb;"></div><div class="a" style="left:56px;top:32px;width:5px;height:1.2px;background:#9cc8f0;"></div><div class="a" style="left:95px;top:32px;width:5px;height:1.2px;background:#9cc8f0;"></div><div class="a" style="left:10px;top:43px;width:20px;height:1.6px;background:#a8c4ee;"></div><div class="a" style="left:52px;top:43px;width:10px;height:1.6px;background:#ccc;"></div><div class="a" style="left:90px;top:43px;width:11px;height:1.6px;background:#ccc;"></div><div class="a" style="left:34px;top:40px;width:81px;height:7px;background:#f4f5f8;"></div><div class="a" style="left:2px;top:51px;width:112px;height:14px;background:#7a28d8;"></div><div class="a" style="left:2px;top:51px;width:30px;height:14px;background:#9a50e8;"></div><div class="a" style="left:35px;top:56px;width:46px;height:4.5px;background:#fff;"></div><div class="a" style="left:14px;top:58px;width:6px;height:6px;background:#e8a0a0;border-radius:3px;"></div><div class="a" style="left:24px;top:58px;width:6px;height:5px;background:#f0c0c0;border-radius:3px;"></div><div class="a" style="left:113px;top:56px;width:2.5px;height:6px;background:#3a3a6a;"></div></div></div>
<div class="a" style="left:202.5px;top:599.3px;width:117px;height:67px;background:#000;border-radius:5px;overflow:hidden"><div style="position:absolute;left:0;top:0;right:0;bottom:0;filter:blur(0.55px)"><div class="a" style="left:0px;top:0px;width:117px;height:67px;background:#000;background:radial-gradient(circle 52px at 61px 36px,#ffab18 0%,#fb9a0c 38%,#ee8408 60%,#d26c08 80%,#b85e0a 92%,#3a1a08 100%);"></div><div class="a" style="left:0px;top:0px;width:117px;height:24px;background:#000;background:linear-gradient(180deg,rgba(150,72,10,.6) 0%,rgba(150,72,10,0) 100%);"></div><div class="a" style="left:96px;top:0px;width:22px;height:67px;background:#000;background:linear-gradient(90deg,rgba(30,12,4,0) 0%,rgba(30,12,4,.85) 60%,#1a0a04 100%);"></div><div class="a" style="left:0px;top:0px;width:14px;height:67px;background:#000;background:linear-gradient(270deg,rgba(40,18,8,0) 0%,rgba(40,18,8,.9) 70%);"></div><div class="a" style="left:40.5px;top:17px;width:7px;height:7.5px;background:#a04616;border-radius:4px;"></div><div class="a" style="left:41.5px;top:24px;width:5.5px;height:27px;background:#1a0c06;border-radius:3px;"></div><div class="a" style="left:45px;top:43px;width:9px;height:10px;background:#3a1a0a;border-radius:5px;"></div><div class="a" style="left:38px;top:48px;width:9px;height:10px;background:#3a1a0a;border-radius:5px;"></div><div class="a" style="left:59px;top:51px;width:10px;height:9px;background:#2e1408;border-radius:5px;"></div><div class="a" style="left:39px;top:53px;width:32px;height:14px;background:#26100a;border-radius:6px 8px 0 0;"></div><div class="a" style="left:36px;top:55px;width:1.5px;height:12px;background:#8a4a18;transform:rotate(14deg);"></div><div class="a" style="left:47px;top:58px;width:5px;height:5px;background:#b85a18;border-radius:3px;"></div><div class="a" style="left:63px;top:57px;width:4px;height:3px;background:#a04a14;border-radius:2px;"></div><div class="a" style="left:77px;top:20px;width:9px;height:9px;background:#6e4a12;border-radius:5px;opacity:.85;"></div><div class="a" style="left:84px;top:19px;width:9px;height:8px;background:#7a5414;border-radius:4px;opacity:.8;"></div><div class="a" style="left:75px;top:27px;width:8px;height:9px;background:#6a4610;border-radius:4px;opacity:.85;"></div><div class="a" style="left:82px;top:26px;width:9px;height:10px;background:#5e3e0e;border-radius:5px;opacity:.9;"></div><div class="a" style="left:89px;top:25px;width:6px;height:7px;background:#76500f;border-radius:3px;opacity:.75;"></div><div class="a" style="left:80px;top:34px;width:8px;height:8px;background:#64420e;border-radius:4px;opacity:.85;"></div><div class="a" style="left:86px;top:40px;width:3px;height:10px;background:#4a2c08;"></div><div class="a" style="left:82px;top:44px;width:10px;height:14px;background:#c46c10;border-radius:45% 45% 30% 30%;"></div><div class="a" style="left:82px;top:56px;width:22px;height:11px;background:#f09a1c;"></div><div class="a" style="left:82px;top:55px;width:20px;height:2px;background:#b05c0c;"></div><div class="a" style="left:97px;top:58px;width:20px;height:9px;background:#0c0402;border-radius:8px 0 0 0;"></div><div class="a" style="left:19.3px;top:25px;width:5.2px;height:42px;background:#151517;"></div><div class="a" style="left:19.8px;top:25px;width:4.2px;height:13px;background:#c4c4c6;"></div><div class="a" style="left:21px;top:25px;width:1.2px;height:13px;background:#f0f0f0;"></div><div class="a" style="left:4px;top:-1px;width:29px;height:28px;background:#2e2e32;border-radius:15px;border:1.5px solid #5e5e62;"></div><div class="a" style="left:12.5px;top:2.5px;width:17px;height:18px;background:#bcd8ec;border-radius:50%;background:linear-gradient(105deg,#58b4ec 0%,#cfeaf6 35%,#f4e8a0 62%,#e8a030 100%);transform:rotate(-12deg);"></div></div></div>
<div class="a" style="left:72px;top:604.5999999999999px;width:31px;height:13.5px;background:#55565a;border-radius:6px;"></div>
<div class="t" style="left:77.20px;top:607.05px;font-size:9.5px;color:#fff;letter-spacing:-0.822px;font-weight:bold;">01:39</div>
<div class="a" style="left:67px;top:698.5px;width:117px;height:67px;background:#ccc;border-radius:5px;overflow:hidden"><div style="position:absolute;left:0;top:0;right:0;bottom:0;filter:blur(0.55px)"><div class="a" style="left:0px;top:0px;width:117px;height:67px;background:#ccc;background:linear-gradient(180deg,#d4d2ce 0%,#d8d5d0 30%,#d2ccc6 45%,#c4bab0 100%);"></div><div class="a" style="left:60px;top:0px;width:57px;height:30px;background:#ccc;background:linear-gradient(90deg,rgba(196,190,190,0),rgba(196,190,190,.8));"></div><div class="a" style="left:55px;top:23px;width:62px;height:12px;background:#d8c4c4;opacity:.8;filter:blur(1.5px);"></div><div class="a" style="left:29px;top:38px;width:22px;height:30px;background:#c4aa8a;border-radius:50% 40% 0 0;"></div><div class="a" style="left:8px;top:25px;width:26px;height:22px;background:#a0a2a8;clip-path:polygon(50% 0,62% 40%,88% 8%,78% 55%,100% 45%,75% 100%,25% 100%,0 45%,22% 55%,12% 8%,38% 40%);"></div><div class="a" style="left:10px;top:40px;width:24px;height:28px;background:#9c9ea4;border-radius:40% 40% 0 0;"></div><div class="a" style="left:4px;top:36px;width:10px;height:6px;background:#c0c2c8;opacity:.8;"></div><div class="a" style="left:12px;top:42px;width:5px;height:24px;background:#c6c8d0;opacity:.6;transform:rotate(8deg);"></div><div class="a" style="left:68px;top:42px;width:22px;height:26px;background:#b8886a;border-radius:50% 30% 0 0;"></div><div class="a" style="left:56px;top:28px;width:22px;height:40px;background:#c2a264;border-radius:45% 50% 0 0;"></div><div class="a" style="left:60px;top:27px;width:12px;height:12px;background:#d8d070;clip-path:polygon(50% 0,62% 40%,88% 8%,78% 55%,100% 45%,75% 100%,25% 100%,0 45%,22% 55%,12% 8%,38% 40%);"></div><div class="a" style="left:42px;top:26px;width:22px;height:18px;background:#ece6a4;clip-path:polygon(50% 0,62% 40%,88% 8%,78% 55%,100% 45%,75% 100%,25% 100%,0 45%,22% 55%,12% 8%,38% 40%);"></div><div class="a" style="left:43px;top:40px;width:22px;height:28px;background:#eae4a2;border-radius:45% 45% 0 0;"></div><div class="a" style="left:49px;top:46px;width:8px;height:20px;background:#f4f2dc;opacity:.7;"></div><div class="a" style="left:84px;top:24px;width:28px;height:22px;background:#e49cc0;clip-path:polygon(50% 0,62% 40%,88% 8%,78% 55%,100% 45%,75% 100%,25% 100%,0 45%,22% 55%,12% 8%,38% 40%);"></div><div class="a" style="left:84px;top:40px;width:28px;height:28px;background:#eaa4cc;border-radius:45% 45% 0 0;"></div><div class="a" style="left:97px;top:34px;width:8px;height:20px;background:#cc7c9c;opacity:.8;transform:rotate(10deg);"></div><div class="a" style="left:101px;top:46px;width:5px;height:10px;background:#a87840;opacity:.8;"></div><div class="a" style="left:108px;top:36px;width:10px;height:32px;background:#a49696;opacity:.8;"></div></div></div>
<div class="a" style="left:202.5px;top:698.5px;width:117px;height:66px;background:#e6ebf7;border-radius:5px;overflow:hidden"><div style="position:absolute;left:0;top:0;right:0;bottom:0;filter:blur(0.55px)"><div class="a" style="left:3px;top:8px;width:5.5px;height:19.5px;background:#a6d4f3;"></div><div class="a" style="left:8.5px;top:8px;width:5.5px;height:19.5px;background:#d2e6f6;"></div><div class="a" style="left:14px;top:8px;width:6px;height:11.5px;background:#f1e9e2;"></div><div class="a" style="left:20px;top:8px;width:6px;height:11.5px;background:#f5c6de;"></div><div class="a" style="left:26px;top:8px;width:5.5px;height:11.5px;background:#f0a0cb;"></div><div class="a" style="left:31.5px;top:8px;width:5.5px;height:11.5px;background:#a6d4f3;"></div><div class="a" style="left:37.0px;top:8px;width:5px;height:11.5px;background:#d2e6f6;"></div><div class="a" style="left:42px;top:8px;width:6px;height:10px;background:#f1e9e2;"></div><div class="a" style="left:48px;top:8px;width:4px;height:10px;background:#f5c6de;"></div><div class="a" style="left:63px;top:8px;width:6px;height:10px;background:#d2e6f6;"></div><div class="a" style="left:50px;top:8px;width:3.5px;height:19.5px;background:#f5c6de;"></div><div class="a" style="left:53.5px;top:8px;width:6px;height:19.5px;background:#f0a0cb;"></div><div class="a" style="left:59.5px;top:8px;width:4px;height:19.5px;background:#a6d4f3;"></div><div class="a" style="left:71px;top:8px;width:28px;height:19.5px;clip-path:polygon(0 0,100% 0,100% 58%,62% 58%,48% 100%,0 100%)"><div class="a" style="left:0px;top:0px;width:6px;height:19.5px;background:#f1e9e2;"></div><div class="a" style="left:6px;top:0px;width:5px;height:19.5px;background:#f5c6de;"></div><div class="a" style="left:11px;top:0px;width:5.5px;height:19.5px;background:#f0a0cb;"></div><div class="a" style="left:16.5px;top:0px;width:5.5px;height:19.5px;background:#a6d4f3;"></div><div class="a" style="left:22.0px;top:0px;width:6px;height:19.5px;background:#d2e6f6;"></div></div><div class="a" style="left:99px;top:11px;width:6px;height:13px;background:#f1e9e2;"></div><div class="a" style="left:105px;top:10.5px;width:9px;height:14px;background:#f5c6de;clip-path:polygon(0 0,100% 50%,0 100%);"></div><div class="a" style="left:108px;top:13.5px;width:5px;height:8px;background:#f0a0cb;clip-path:polygon(0 0,100% 50%,0 100%);"></div><div class="a" style="left:3px;top:39px;width:5.5px;height:19.5px;background:#a6d4f3;"></div><div class="a" style="left:8.5px;top:39px;width:5.5px;height:19.5px;background:#d2e6f6;"></div><div class="a" style="left:14px;top:47px;width:6px;height:11.5px;background:#f1e9e2;"></div><div class="a" style="left:20px;top:47px;width:6px;height:11.5px;background:#f5c6de;"></div><div class="a" style="left:26px;top:47px;width:5.5px;height:11.5px;background:#f0a0cb;"></div><div class="a" style="left:31.5px;top:47px;width:5.5px;height:11.5px;background:#a6d4f3;"></div><div class="a" style="left:37.0px;top:47px;width:5px;height:11.5px;background:#d2e6f6;"></div><div class="a" style="left:50px;top:39px;width:3.5px;height:19.5px;background:#f5c6de;"></div><div class="a" style="left:53.5px;top:39px;width:6px;height:19.5px;background:#f0a0cb;"></div><div class="a" style="left:59.5px;top:39px;width:4px;height:19.5px;background:#a6d4f3;"></div><div class="a" style="left:71px;top:39px;width:28px;height:19.5px;clip-path:polygon(0 0,28% 0,62% 42%,100% 42%,100% 100%,34% 100%,0 40%)"><div class="a" style="left:0px;top:0px;width:2px;height:19.5px;background:#f1e9e2;"></div><div class="a" style="left:2px;top:0px;width:7px;height:19.5px;background:#f5c6de;"></div><div class="a" style="left:9px;top:0px;width:7.5px;height:19.5px;background:#f0a0cb;"></div><div class="a" style="left:16.5px;top:0px;width:5.5px;height:19.5px;background:#a6d4f3;"></div><div class="a" style="left:22.0px;top:0px;width:6px;height:19.5px;background:#d2e6f6;"></div></div><div class="a" style="left:99px;top:42px;width:6px;height:13px;background:#f1e9e2;"></div><div class="a" style="left:105px;top:41.5px;width:9px;height:14px;background:#f5c6de;clip-path:polygon(0 0,100% 50%,0 100%);"></div><div class="a" style="left:108px;top:44.5px;width:5px;height:8px;background:#f0a0cb;clip-path:polygon(0 0,100% 50%,0 100%);"></div></div></div>
<div class="a" style="left:67px;top:797.2px;width:117px;height:66px;background:#e6ebf7;border-radius:5px;overflow:hidden"><div style="position:absolute;left:0;top:0;right:0;bottom:0;filter:blur(0.55px)"><div class="a" style="left:3px;top:6px;width:5.5px;height:19.5px;background:#a6d4f3;"></div><div class="a" style="left:8.5px;top:6px;width:5.5px;height:19.5px;background:#d2e6f6;"></div><div class="a" style="left:14px;top:6px;width:6px;height:11.5px;background:#f1e9e2;"></div><div class="a" style="left:20px;top:6px;width:6px;height:11.5px;background:#f5c6de;"></div><div class="a" style="left:26px;top:6px;width:5.5px;height:11.5px;background:#f0a0cb;"></div><div class="a" style="left:31.5px;top:6px;width:5.5px;height:11.5px;background:#a6d4f3;"></div><div class="a" style="left:37.0px;top:6px;width:5px;height:11.5px;background:#d2e6f6;"></div><div class="a" style="left:42px;top:6px;width:6px;height:10px;background:#f1e9e2;"></div><div class="a" style="left:48px;top:6px;width:4px;height:10px;background:#f5c6de;"></div><div class="a" style="left:63px;top:6px;width:6px;height:10px;background:#d2e6f6;"></div><div class="a" style="left:50px;top:6px;width:3.5px;height:19.5px;background:#f5c6de;"></div><div class="a" style="left:53.5px;top:6px;width:6px;height:19.5px;background:#f0a0cb;"></div><div class="a" style="left:59.5px;top:6px;width:4px;height:19.5px;background:#a6d4f3;"></div><div class="a" style="left:71px;top:6px;width:28px;height:19.5px;clip-path:polygon(0 0,100% 0,100% 58%,62% 58%,48% 100%,0 100%)"><div class="a" style="left:0px;top:0px;width:6px;height:19.5px;background:#f1e9e2;"></div><div class="a" style="left:6px;top:0px;width:5px;height:19.5px;background:#f5c6de;"></div><div class="a" style="left:11px;top:0px;width:5.5px;height:19.5px;background:#f0a0cb;"></div><div class="a" style="left:16.5px;top:0px;width:5.5px;height:19.5px;background:#a6d4f3;"></div><div class="a" style="left:22.0px;top:0px;width:6px;height:19.5px;background:#d2e6f6;"></div></div><div class="a" style="left:99px;top:9px;width:6px;height:13px;background:#f1e9e2;"></div><div class="a" style="left:105px;top:8.5px;width:9px;height:14px;background:#f5c6de;clip-path:polygon(0 0,100% 50%,0 100%);"></div><div class="a" style="left:108px;top:11.5px;width:5px;height:8px;background:#f0a0cb;clip-path:polygon(0 0,100% 50%,0 100%);"></div><div class="a" style="left:3px;top:37px;width:5.5px;height:19.5px;background:#a6d4f3;"></div><div class="a" style="left:8.5px;top:37px;width:5.5px;height:19.5px;background:#d2e6f6;"></div><div class="a" style="left:14px;top:45px;width:6px;height:11.5px;background:#f1e9e2;"></div><div class="a" style="left:20px;top:45px;width:6px;height:11.5px;background:#f5c6de;"></div><div class="a" style="left:26px;top:45px;width:5.5px;height:11.5px;background:#f0a0cb;"></div><div class="a" style="left:31.5px;top:45px;width:5.5px;height:11.5px;background:#a6d4f3;"></div><div class="a" style="left:37.0px;top:45px;width:5px;height:11.5px;background:#d2e6f6;"></div><div class="a" style="left:50px;top:37px;width:3.5px;height:19.5px;background:#f5c6de;"></div><div class="a" style="left:53.5px;top:37px;width:6px;height:19.5px;background:#f0a0cb;"></div><div class="a" style="left:59.5px;top:37px;width:4px;height:19.5px;background:#a6d4f3;"></div><div class="a" style="left:71px;top:37px;width:28px;height:19.5px;clip-path:polygon(0 0,28% 0,62% 42%,100% 42%,100% 100%,34% 100%,0 40%)"><div class="a" style="left:0px;top:0px;width:2px;height:19.5px;background:#f1e9e2;"></div><div class="a" style="left:2px;top:0px;width:7px;height:19.5px;background:#f5c6de;"></div><div class="a" style="left:9px;top:0px;width:7.5px;height:19.5px;background:#f0a0cb;"></div><div class="a" style="left:16.5px;top:0px;width:5.5px;height:19.5px;background:#a6d4f3;"></div><div class="a" style="left:22.0px;top:0px;width:6px;height:19.5px;background:#d2e6f6;"></div></div><div class="a" style="left:99px;top:40px;width:6px;height:13px;background:#f1e9e2;"></div><div class="a" style="left:105px;top:39.5px;width:9px;height:14px;background:#f5c6de;clip-path:polygon(0 0,100% 50%,0 100%);"></div><div class="a" style="left:108px;top:42.5px;width:5px;height:8px;background:#f0a0cb;clip-path:polygon(0 0,100% 50%,0 100%);"></div></div></div>
<div class="a" style="left:202.5px;top:797.2px;width:117px;height:66px;background:#e6ebf7;border-radius:5px;overflow:hidden"><div style="position:absolute;left:0;top:0;right:0;bottom:0;filter:blur(0.55px)"><div class="a" style="left:3px;top:6px;width:5.5px;height:19.5px;background:#a6d4f3;"></div><div class="a" style="left:8.5px;top:6px;width:5.5px;height:19.5px;background:#d2e6f6;"></div><div class="a" style="left:14px;top:6px;width:6px;height:11.5px;background:#f1e9e2;"></div><div class="a" style="left:20px;top:6px;width:6px;height:11.5px;background:#f5c6de;"></div><div class="a" style="left:26px;top:6px;width:5.5px;height:11.5px;background:#f0a0cb;"></div><div class="a" style="left:31.5px;top:6px;width:5.5px;height:11.5px;background:#a6d4f3;"></div><div class="a" style="left:37.0px;top:6px;width:5px;height:11.5px;background:#d2e6f6;"></div><div class="a" style="left:42px;top:6px;width:6px;height:10px;background:#f1e9e2;"></div><div class="a" style="left:48px;top:6px;width:4px;height:10px;background:#f5c6de;"></div><div class="a" style="left:63px;top:6px;width:6px;height:10px;background:#d2e6f6;"></div><div class="a" style="left:50px;top:6px;width:3.5px;height:19.5px;background:#f5c6de;"></div><div class="a" style="left:53.5px;top:6px;width:6px;height:19.5px;background:#f0a0cb;"></div><div class="a" style="left:59.5px;top:6px;width:4px;height:19.5px;background:#a6d4f3;"></div><div class="a" style="left:71px;top:6px;width:28px;height:19.5px;clip-path:polygon(0 0,100% 0,100% 58%,62% 58%,48% 100%,0 100%)"><div class="a" style="left:0px;top:0px;width:6px;height:19.5px;background:#f1e9e2;"></div><div class="a" style="left:6px;top:0px;width:5px;height:19.5px;background:#f5c6de;"></div><div class="a" style="left:11px;top:0px;width:5.5px;height:19.5px;background:#f0a0cb;"></div><div class="a" style="left:16.5px;top:0px;width:5.5px;height:19.5px;background:#a6d4f3;"></div><div class="a" style="left:22.0px;top:0px;width:6px;height:19.5px;background:#d2e6f6;"></div></div><div class="a" style="left:99px;top:9px;width:6px;height:13px;background:#f1e9e2;"></div><div class="a" style="left:105px;top:8.5px;width:9px;height:14px;background:#f5c6de;clip-path:polygon(0 0,100% 50%,0 100%);"></div><div class="a" style="left:108px;top:11.5px;width:5px;height:8px;background:#f0a0cb;clip-path:polygon(0 0,100% 50%,0 100%);"></div><div class="a" style="left:3px;top:37px;width:5.5px;height:19.5px;background:#a6d4f3;"></div><div class="a" style="left:8.5px;top:37px;width:5.5px;height:19.5px;background:#d2e6f6;"></div><div class="a" style="left:14px;top:45px;width:6px;height:11.5px;background:#f1e9e2;"></div><div class="a" style="left:20px;top:45px;width:6px;height:11.5px;background:#f5c6de;"></div><div class="a" style="left:26px;top:45px;width:5.5px;height:11.5px;background:#f0a0cb;"></div><div class="a" style="left:31.5px;top:45px;width:5.5px;height:11.5px;background:#a6d4f3;"></div><div class="a" style="left:37.0px;top:45px;width:5px;height:11.5px;background:#d2e6f6;"></div><div class="a" style="left:50px;top:37px;width:3.5px;height:19.5px;background:#f5c6de;"></div><div class="a" style="left:53.5px;top:37px;width:6px;height:19.5px;background:#f0a0cb;"></div><div class="a" style="left:59.5px;top:37px;width:4px;height:19.5px;background:#a6d4f3;"></div><div class="a" style="left:71px;top:37px;width:28px;height:19.5px;clip-path:polygon(0 0,28% 0,62% 42%,100% 42%,100% 100%,34% 100%,0 40%)"><div class="a" style="left:0px;top:0px;width:2px;height:19.5px;background:#f1e9e2;"></div><div class="a" style="left:2px;top:0px;width:7px;height:19.5px;background:#f5c6de;"></div><div class="a" style="left:9px;top:0px;width:7.5px;height:19.5px;background:#f0a0cb;"></div><div class="a" style="left:16.5px;top:0px;width:5.5px;height:19.5px;background:#a6d4f3;"></div><div class="a" style="left:22.0px;top:0px;width:6px;height:19.5px;background:#d2e6f6;"></div></div><div class="a" style="left:99px;top:40px;width:6px;height:13px;background:#f1e9e2;"></div><div class="a" style="left:105px;top:39.5px;width:9px;height:14px;background:#f5c6de;clip-path:polygon(0 0,100% 50%,0 100%);"></div><div class="a" style="left:108px;top:42.5px;width:5px;height:8px;background:#f0a0cb;clip-path:polygon(0 0,100% 50%,0 100%);"></div></div></div>
<div class="t" style="left:67.30px;top:280.65px;font-size:9.3px;color:#b7bbd5;letter-spacing:-0.185px;-webkit-text-stroke:0.22px;">Camera 2021-08-14 19-39-...</div>
<div class="t" style="left:202.60px;top:280.65px;font-size:9.3px;color:#b7bbd5;letter-spacing:-0.247px;-webkit-text-stroke:0.22px;">zoom_1.mp4</div>
<div class="t" style="left:67.30px;top:379.65px;font-size:9.3px;color:#b7bbd5;letter-spacing:-0.138px;-webkit-text-stroke:0.22px;">icecreamshoead1.JPG</div>
<div class="t" style="left:202.60px;top:379.65px;font-size:9.3px;color:#b7bbd5;letter-spacing:-0.073px;-webkit-text-stroke:0.22px;">icecreamshoead3.JPG</div>
<div class="t" style="left:67.30px;top:478.65px;font-size:9.3px;color:#b7bbd5;letter-spacing:-0.035px;-webkit-text-stroke:0.22px;">icecreamshoead5.JPG</div>
<div class="t" style="left:202.60px;top:478.65px;font-size:9.3px;color:#b7bbd5;letter-spacing:-0.143px;-webkit-text-stroke:0.22px;">icecreamshoead1.JPG</div>
<div class="t" style="left:67.30px;top:576.65px;font-size:9.3px;color:#b7bbd5;letter-spacing:0.008px;-webkit-text-stroke:0.22px;">icecreamshoead4.JPG</div>
<div class="t" style="left:202.60px;top:576.65px;font-size:9.3px;color:#b7bbd5;letter-spacing:-0.019px;-webkit-text-stroke:0.22px;">icecreamshoead2.JPG</div>
<div class="t" style="left:67.30px;top:675.65px;font-size:9.3px;color:#b7bbd5;letter-spacing:-0.068px;-webkit-text-stroke:0.22px;">zoom_5.mp4</div>
<div class="t" style="left:202.60px;top:675.65px;font-size:9.3px;color:#b7bbd5;letter-spacing:0.006px;-webkit-text-stroke:0.22px;">sunset lamp.jpg</div>
<div class="t" style="left:67.30px;top:774.65px;font-size:9.3px;color:#b7bbd5;letter-spacing:0.020px;-webkit-text-stroke:0.22px;">pineapple lamp.jpg</div>
<div class="t" style="left:202.60px;top:774.65px;font-size:9.3px;color:#b7bbd5;letter-spacing:-0.077px;-webkit-text-stroke:0.22px;">ETC white-02 - Resized.png</div>
<!-- toolbar -->
<div class="a" style="left:354px;top:39px;width:1100px;height:37.5px;background:#fff;border-radius:7px 0 0 7px;"></div>
<svg class="a" style="left:367px;top:51px;" width="15" height="16" viewBox="0 0 15 16"><g stroke="#b9bbcc" stroke-width="1.1" stroke-linecap="round"><path d="M5.5 1 V3.2 M1.8 2.6 L3.3 4.2 M0.8 6.4 H3 M9.2 2.6 L7.8 4.2 M2 10.2 L3.4 8.8"/></g><path d="M5.6 5.8 L13.2 9 L9.9 10.1 L12.4 13 L11 14.2 L8.6 11.3 L7.2 14.2 Z" fill="#2f8df0"/></svg>
<div class="t" style="left:395.00px;top:54.00px;font-size:10.6px;color:#a3a6c3;letter-spacing:0.377px;-webkit-text-stroke:0.22px;">Select an element on the canvas to edit it's properties.</div>
<svg class="a" style="left:1206px;top:51px;" width="15" height="15" viewBox="0 0 15 15"><rect x="4.6" y="0.4" width="9.8" height="9.8" rx="1.6" fill="#9a9cc8"/><rect x="0.2" y="4.2" width="10.6" height="10.6" rx="1.8" fill="#9a9cc8" stroke="#fff" stroke-width="1.1"/></svg>
<svg class="a" style="left:1232px;top:50.5px;" width="13" height="15" viewBox="0 0 13 15"><path d="M3.6 1.6 H1.4 a0.9 0.9 0 0 0 -0.9 0.9 V13 a0.9 0.9 0 0 0 0.9 0.9 H4.6 M7.6 1.6 H9.6 a0.9 0.9 0 0 1 0.9 0.9 V4.4" fill="none" stroke="#a3a5ce" stroke-width="1.1"/><rect x="3.2" y="0.5" width="4.6" height="2.4" rx="0.8" fill="#fff" stroke="#a3a5ce" stroke-width="0.9"/><rect x="5.6" y="5" width="7" height="9.6" rx="1.2" fill="#9a9cc8"/></svg>
<div class="a" style="left:1259px;top:46px;width:1px;height:24px;background:#e4e7f2;"></div>
<svg class="a" style="left:1273px;top:50.5px;" width="14" height="14" viewBox="0 0 14 14"><rect x="0.8" y="4.2" width="8.6" height="8.6" rx="1" fill="none" stroke="#d5d6ea" stroke-width="1"/><rect x="3.8" y="0.4" width="9.6" height="9.6" rx="1.4" fill="#a3a5ce"/></svg>
<svg class="a" style="left:1298.5px;top:50.5px;" width="14" height="14" viewBox="0 0 14 14"><rect x="0.4" y="4" width="9.6" height="9.6" rx="1.4" fill="#a3a5ce"/><rect x="3.6" y="0.8" width="9.4" height="9.4" rx="1.2" fill="#fff" stroke="#cfd1e6" stroke-width="1.1"/></svg>
<div class="a" style="left:1325.5px;top:46px;width:1px;height:24px;background:#e4e7f2;"></div>
<svg class="a" style="left:1341px;top:51.5px;" width="11" height="14" viewBox="0 0 11 14"><path d="M0.6 2.4 H10.4 M3.8 2.2 V0.8 H7.2 V2.2" fill="none" stroke="#b3b5d7" stroke-width="1.1"/><path d="M1.5 3.6 H9.5 L8.8 13 H2.2 Z" fill="#b3b5d7"/><path d="M4.1 5.4 V11.2 M6.9 5.4 V11.2" stroke="#fff" stroke-width="0.9"/></svg>
<div class="a" style="left:1367.5px;top:46px;width:1px;height:24px;background:#e4e7f2;"></div>
<svg class="a" style="left:1381px;top:51px;" width="14" height="14" viewBox="0 0 14 14"><rect x="0.7" y="0.7" width="12.6" height="12.6" rx="2.2" fill="#fff" stroke="#8a8c9c" stroke-width="1.2"/><path d="M4.9 2 V12 M9.1 2 V12" stroke="#3a56b8" stroke-width="0.9"/><path d="M2 4.9 H12 M2 9.1 H12" stroke="#c85a6a" stroke-width="0.9"/></svg>
<div class="a" style="left:1408.3px;top:46px;width:1px;height:24px;background:#e4e7f2;"></div>
<div class="a" style="left:1418.7px;top:50.7px;width:14.6px;height:14.6px;background:#15134f;border-radius:8px;"></div>
<svg class="a" style="left:1422.5px;top:53.5px;" width="8" height="9" viewBox="0 0 8 9"><polygon points="1,0.6 7.4,4.5 1,8.4" fill="#6aa6f6"/><polygon points="1,2.2 1,6.8 4.6,4.5" fill="#e8f0ff"/></svg>
<!-- canvas -->
<div class="a" style="left:354px;top:87px;width:829.5px;height:484.5px;background:#fff;border-radius:6px;"></div>
<div class="a" style="left:370.2px;top:107px;width:796.6px;height:444.3px;background:#03122b;"></div>
<div class="t" style="left:577.50px;top:314.55px;font-size:36.5px;color:#fff;letter-spacing:0.296px;font-weight:bold;">Build your own scene</div>
<div class="a" style="left:1088.5px;top:127.5px;width:52.6px;height:52.6px;background:#cbcde0;border-radius:27px;border:1.2px dashed #3b3a8a;"></div>
<svg class="a" style="left:1109px;top:134.5px;" width="12" height="11" viewBox="0 0 12 11"><path d="M6 1 V7 M3.6 3.2 L6 0.9 L8.4 3.2" fill="none" stroke="#3b3a8a" stroke-width="1.5"/><path d="M1.4 5.6 V8.2 a1 1 0 0 0 1 1 H9.6 a1 1 0 0 0 1 -1 V5.6" fill="none" stroke="#3b3a8a" stroke-width="1.2"/></svg>
<div class="t" style="left:1100.20px;top:148.00px;font-size:9.6px;color:#5251a0;transform-origin:0 0;transform:scaleX(0.7159);font-weight:bold;">UPLOAD</div>
<div class="t" style="left:1103.00px;top:159.30px;font-size:12px;color:#3b3a8a;transform-origin:0 0;transform:scaleX(0.6736);font-weight:bold;">LOGO</div>
<!-- right -->
<div class="a" style="left:1197px;top:87px;width:260px;height:484.5px;background:#fff;border-radius:6px 0 0 6px;"></div>
<div class="a" style="left:1204.5px;top:92.5px;width:17px;height:17px;background:#e7edf8;border-radius:9px;"></div>
<svg class="a" style="left:1210px;top:97px;" width="6" height="9" viewBox="0 0 6 9"><path d="M1.6 1.4 L4.4 4.4 L1.6 7.4" fill="none" stroke="#8a8db8" stroke-width="1.3" stroke-linecap="round" stroke-linejoin="round"/></svg>
<div class="t" style="left:1300.50px;top:96.30px;font-size:13px;color:#45456f;letter-spacing:-0.731px;-webkit-text-stroke:0.22px;">Layers</div>
<div class="a" style="left:1197px;top:117px;width:260px;height:2px;background:#4d4c98;"></div>
<div class="t" style="left:1221.40px;top:131.30px;font-size:19px;color:#2c2c62;letter-spacing:0.000px;font-weight:bold;font-family:'Liberation Serif',serif;">T</div>
<div class="t" style="left:1242.00px;top:134.90px;font-size:10.8px;color:#3c3c70;letter-spacing:-0.596px;-webkit-text-stroke:0.22px;">Build your own scene</div>
<div class="a" style="left:1209px;top:157.5px;width:222px;height:1px;background:#eff0f5;"></div>
<div class="t" style="left:1221.50px;top:169.60px;font-size:11.4px;color:#45456f;letter-spacing:-0.476px;-webkit-text-stroke:0.22px;">Change Project Colors</div>
<svg class="a" style="left:1401px;top:167.8px;" width="13" height="13" viewBox="0 0 13 13"><circle cx="6.5" cy="6.5" r="5.6" fill="none" stroke="#45456f" stroke-width="1.1"/><path d="M4.2 5.6 L6.5 8 L8.8 5.6" fill="none" stroke="#45456f" stroke-width="1.1" stroke-linecap="round" stroke-linejoin="round"/></svg>
<!-- timeline -->
<div class="a" style="left:354px;top:584.5px;width:1100px;height:208px;background:#fff;border-radius:6px 0 0 0;"></div>
<div class="a" style="left:366px;top:597px;width:86.5px;height:23.5px;background:#fff;border-radius:3px;border:1.3px solid #8f90c0;"></div>
<svg class="a" style="left:378px;top:602.8px;" width="13.0" height="12.0" viewBox="0 0 13 11"><path d="M1 3.2 H12 M0.4 7.8 H9.6" stroke="#3b3a8a" stroke-width="1.9"/><path d="M6.4 0.4 V10.6" stroke="#3b3a8a" stroke-width="2"/><path d="M3 3.2 H12" stroke="#3b3a8a" stroke-width="1.9"/></svg>
<div class="t" style="left:398.80px;top:603.20px;font-size:13.2px;color:#47477c;letter-spacing:-0.494px;-webkit-text-stroke:0.22px;">Timeline</div>
<div class="a" style="left:461px;top:597px;width:93.5px;height:23.5px;background:#fff;border-radius:3px;border:1.3px solid #8f90c0;"></div>
<svg class="a" style="left:472.5px;top:600.8px;" width="11" height="15" viewBox="0 0 11 15"><rect x="3.3" y="0.6" width="4.4" height="8.4" rx="2.2" fill="#3b3a8a"/><path d="M1.2 6.6 a4.3 4.3 0 0 0 8.6 0 M5.5 11 V13.6" fill="none" stroke="#3b3a8a" stroke-width="1.3"/></svg>
<div class="t" style="left:490.80px;top:603.20px;font-size:13.2px;color:#47477c;letter-spacing:-0.595px;-webkit-text-stroke:0.22px;">Voice over</div>
<div class="a" style="left:563px;top:597px;width:69.5px;height:23.5px;background:#fff;border-radius:3px;border:1.3px solid #8f90c0;"></div>
<div class="a" style="left:572.5999999999999px;top:601.6999999999999px;width:13.4px;height:13.4px;background:#3b3a8a;border-radius:7.7px;"></div>
<svg class="a" style="left:575.3px;top:604.4px;" width="8" height="8" viewBox="0 0 8 8"><path d="M4 1 V7 M1 4 H7" stroke="#fff" stroke-width="1.5"/></svg>
<div class="t" style="left:592.50px;top:603.20px;font-size:13.2px;color:#47477c;letter-spacing:-0.986px;-webkit-text-stroke:0.22px;">Scene</div>
<svg class="a" style="left:840.5px;top:603.5px;" width="11" height="10" viewBox="0 0 11 10"><rect x="0.4" y="0.8" width="1.8" height="8.4" fill="#8f90c0"/><polygon points="10.4,0.8 10.4,9.2 3,5" fill="#8f90c0"/></svg>
<svg class="a" style="left:873.5px;top:598.5px;" width="19" height="19" viewBox="0 0 19 19"><rect x="5" y="3.6" width="10.4" height="10.4" rx="1.6" fill="none" stroke="#3b3a8a" stroke-width="1.4"/><polygon points="8.3,6 8.3,11.6 13,8.8" fill="#3b3a8a"/><path d="M8 1.2 H15.4 a2.4 2.4 0 0 1 2.4 2.4 V10.6" fill="none" stroke="#6a6aa8" stroke-width="1.2"/><path d="M2.4 6.6 V14.2 a2.4 2.4 0 0 0 2.4 2.4 H12" fill="none" stroke="#6a6aa8" stroke-width="1.2"/></svg>
<div class="a" style="left:909px;top:594px;width:29.2px;height:29.2px;background:#3b3a8a;border-radius:15px;"></div>
<svg class="a" style="left:918.5px;top:602px;" width="12" height="14" viewBox="0 0 12 14"><polygon points="1,0.8 11.2,7 1,13.2" fill="#fff"/></svg>
<svg class="a" style="left:960.5px;top:603.5px;" width="11" height="10" viewBox="0 0 11 10"><rect x="8.8" y="0.8" width="1.8" height="8.4" fill="#8f90c0"/><polygon points="0.6,0.8 0.6,9.2 8,5" fill="#8f90c0"/></svg>
<div class="t" style="left:990.30px;top:603.15px;font-size:12.3px;color:#5a5a8c;letter-spacing:0.401px;-webkit-text-stroke:0.22px;">00:02:50 / 00:05:00</div>
<svg class="a" style="left:1301.5px;top:601.5px;" width="14" height="14" viewBox="0 0 14 14"><circle cx="5.8" cy="5.6" r="4.8" fill="none" stroke="#45456f" stroke-width="1.2"/><path d="M9.4 9.2 L12.2 12" stroke="#45456f" stroke-width="1.5" stroke-linecap="round"/><path d="M3.8 5.6 H7.8" stroke="#45456f" stroke-width="1.2"/></svg>
<div class="a" style="left:1320.5px;top:607.8px;width:66px;height:1.6px;background:#e3e5f0;border-radius:1px;"></div>
<div class="a" style="left:1320.5px;top:607.5px;width:33px;height:2.1px;background:#3b3a8a;border-radius:1px;"></div>
<div class="a" style="left:1348.4px;top:603.2px;width:10.6px;height:10.6px;background:#3b3a8a;border-radius:6px;"></div>
<svg class="a" style="left:1391.5px;top:601.5px;" width="14" height="14" viewBox="0 0 14 14"><circle cx="5.8" cy="5.6" r="4.8" fill="none" stroke="#45456f" stroke-width="1.2"/><path d="M9.4 9.2 L12.2 12" stroke="#45456f" stroke-width="1.5" stroke-linecap="round"/><path d="M3.8 5.6 H7.8 M5.8 3.6 V7.6" stroke="#45456f" stroke-width="1.2"/></svg>
<div class="a" style="left:1414.5px;top:600.8px;width:17.5px;height:14px;background:#fff;border-radius:2.5px;border:1.3px solid #6a6aa8;"></div>
<svg class="a" style="left:1418px;top:604.8px;" width="11" height="6" viewBox="0 0 11 6"><path d="M1.6 3 H9.4 M3.2 1.2 L1.3 3 L3.2 4.8 M7.8 1.2 L9.7 3 L7.8 4.8" fill="none" stroke="#3b3a8a" stroke-width="1.1"/></svg>
<div class="a" style="left:366px;top:641px;width:180.5px;height:22px;background:#e6ebf7;border-radius:2px;"></div>
<div class="a" style="left:367px;top:665px;width:1080px;height:21.5px;background:#f6f6f9;"></div>
<div class="a" style="left:366.3px;top:650.5px;width:1.2px;height:9.7px;background:#c6c9d8;"></div>
<div class="t" style="left:369.90px;top:651.65px;font-size:10.3px;color:#c8cbda;letter-spacing:0.083px;-webkit-text-stroke:0.22px;">0s</div>
<div class="a" style="left:438.7px;top:650.5px;width:1px;height:7.5px;background:#d9dbe6;"></div>
<div class="a" style="left:511.1px;top:650.5px;width:1.2px;height:9.7px;background:#c6c9d8;"></div>
<div class="t" style="left:514.65px;top:651.65px;font-size:10.3px;color:#c8cbda;letter-spacing:0.083px;-webkit-text-stroke:0.22px;">4s</div>
<div class="a" style="left:583.4px;top:650.5px;width:1px;height:7.5px;background:#d9dbe6;"></div>
<div class="a" style="left:655.8px;top:650.5px;width:1.2px;height:9.7px;background:#c6c9d8;"></div>
<div class="t" style="left:659.40px;top:651.65px;font-size:10.3px;color:#c8cbda;letter-spacing:0.083px;-webkit-text-stroke:0.22px;">8s</div>
<div class="a" style="left:728.2px;top:650.5px;width:1px;height:7.5px;background:#d9dbe6;"></div>
<div class="a" style="left:800.5px;top:650.5px;width:1.2px;height:9.7px;background:#c6c9d8;"></div>
<div class="t" style="left:804.15px;top:651.65px;font-size:10.3px;color:#c8cbda;letter-spacing:-0.041px;-webkit-text-stroke:0.22px;">12s</div>
<div class="a" style="left:872.9px;top:650.5px;width:1px;height:7.5px;background:#d9dbe6;"></div>
<div class="a" style="left:945.3px;top:650.5px;width:1.2px;height:9.7px;background:#c6c9d8;"></div>
<div class="t" style="left:948.90px;top:651.65px;font-size:10.3px;color:#c8cbda;letter-spacing:-0.041px;-webkit-text-stroke:0.22px;">16s</div>
<div class="a" style="left:1017.7px;top:650.5px;width:1px;height:7.5px;background:#d9dbe6;"></div>
<div class="a" style="left:1090.0px;top:650.5px;width:1.2px;height:9.7px;background:#c6c9d8;"></div>
<div class="t" style="left:1093.65px;top:651.65px;font-size:10.3px;color:#c8cbda;letter-spacing:-0.041px;-webkit-text-stroke:0.22px;">20s</div>
<div class="a" style="left:1162.4px;top:650.5px;width:1px;height:7.5px;background:#d9dbe6;"></div>
<div class="a" style="left:1234.8px;top:650.5px;width:1.2px;height:9.7px;background:#c6c9d8;"></div>
<div class="t" style="left:1238.40px;top:651.65px;font-size:10.3px;color:#c8cbda;letter-spacing:-0.041px;-webkit-text-stroke:0.22px;">24s</div>
<div class="a" style="left:1307.2px;top:650.5px;width:1px;height:7.5px;background:#d9dbe6;"></div>
<div class="a" style="left:1379.5px;top:650.5px;width:1.2px;height:9.7px;background:#c6c9d8;"></div>
<div class="t" style="left:1383.15px;top:651.65px;font-size:10.3px;color:#c8cbda;letter-spacing:-0.041px;-webkit-text-stroke:0.22px;">28s</div>
<div class="a" style="left:371px;top:689.3px;width:231.5px;height:21.2px;background:#3d3d3d;border-radius:5px;"></div>
<svg class="a" style="left:386.5px;top:710px;" width="7" height="4" viewBox="0 0 7 4"><polygon points="0,0 7,0 3.5,3.6" fill="#3d3d3d"/></svg>
<div class="t" style="left:380.30px;top:695.05px;font-size:10.5px;color:#fff;letter-spacing:0.063px;font-weight:bold;">00:05:00</div>
<svg class="a" style="left:431px;top:694.5px;" width="10" height="10" viewBox="0 0 10 10"><path d="M0.8 9.2 L1.4 6.8 L7 1.2 L8.9 3.1 L3.3 8.7 Z" fill="#fff"/></svg>
<div class="a" style="left:452.3px;top:693px;width:1.2px;height:14.5px;background:#666;"></div>
<svg class="a" style="left:461px;top:694px;" width="12" height="12" viewBox="0 0 12 12"><path d="M10.2 4.4 A4.6 4.6 0 1 0 10.6 6.8" fill="none" stroke="#fff" stroke-width="1.4"/><path d="M6 3.4 V6.3 H8.6" fill="none" stroke="#fff" stroke-width="1.2"/><polygon points="8.4,3 11.8,2.4 11,5.8" fill="#fff"/></svg>
<div class="a" style="left:479.8px;top:693px;width:1.2px;height:14.5px;background:#666;"></div>
<svg class="a" style="left:488.5px;top:694.5px;" width="9" height="11" viewBox="0 0 9 11"><path d="M0.5 2 H8.5 M3.1 1.8 V0.7 H5.9 V1.8" fill="none" stroke="#7a7a7a" stroke-width="1"/><path d="M1.3 3 H7.7 L7.1 10.2 H1.9 Z" fill="#7a7a7a"/></svg>
<svg class="a" style="left:511px;top:694.5px;" width="11" height="11" viewBox="0 0 11 11"><rect x="0.6" y="0.6" width="6.6" height="6.6" rx="1" fill="none" stroke="#fff" stroke-width="1.2"/><rect x="3.2" y="3.2" width="7.4" height="7.4" rx="1.2" fill="#fff"/><path d="M6.9 5.2 V8.6 M5.2 6.9 H8.6" stroke="#3d3d3d" stroke-width="0.9"/></svg>
<div class="a" style="left:528.8px;top:693px;width:1.2px;height:14.5px;background:#666;"></div>
<svg class="a" style="left:538px;top:694.8px;" width="11.0" height="9.3" viewBox="0 0 13 11"><path d="M1 3.2 H12 M0.4 7.8 H9.6" stroke="#fff" stroke-width="1.9"/><path d="M6.4 0.4 V10.6" stroke="#fff" stroke-width="2"/><path d="M3 3.2 H12" stroke="#fff" stroke-width="1.9"/></svg>
<div class="t" style="left:555.50px;top:695.05px;font-size:10.5px;color:#fff;letter-spacing:-0.614px;font-weight:bold;">Timeline</div>
<div class="a" style="left:366px;top:713.6px;width:180.8px;height:74px;background:#56a8f5;border-radius:6.5px;border:1.8px solid #3b3a90;"></div>
<div class="a" style="left:397px;top:717.5px;width:118.3px;height:66.3px;background:#06132c;border-radius:4px;"></div>
<div class="t" style="left:428.50px;top:748.60px;font-size:5.4px;color:#dfe3ee;letter-spacing:-0.004px;font-weight:bold;">Build your own scene</div>
<div class="a" style="left:504px;top:720.4px;width:8px;height:8px;background:#9a9a9e;border-radius:4px;"></div>
<div class="a" style="left:505.8px;top:723.9px;width:4.4px;height:1.1px;background:#444;"></div>
<div class="a" style="left:428.8px;top:767px;width:55.2px;height:20.4px;background:#000;border-radius:8px 8px 0 0;"></div>
<div class="t" style="left:437.70px;top:773.00px;font-size:9.6px;color:#fff;letter-spacing:-0.614px;font-weight:bold;">Scene 01</div>
<div class="a" style="left:540.8px;top:721.3px;width:2.4px;height:62.5px;background:#fff;border-radius:1px;"></div>
<div class="a" style="left:572px;top:738.3px;width:69.7px;height:24px;background:#fff;border-radius:3px;border:1.3px solid #8f90c0;"></div>
<div class="a" style="left:581.4px;top:743.3px;width:13.4px;height:13.4px;background:#3b3a8a;border-radius:7.7px;"></div>
<svg class="a" style="left:584.1px;top:746px;" width="8" height="8" viewBox="0 0 8 8"><path d="M4 1 V7 M1 4 H7" stroke="#fff" stroke-width="1.5"/></svg>
<div class="t" style="left:601.30px;top:745.30px;font-size:13px;color:#47477c;letter-spacing:-0.791px;-webkit-text-stroke:0.22px;">Scene</div>
<div class="a" style="left:354px;top:792.5px;width:1100px;height:20px;background:#e7edf8;"></div>
<div class="a" style="left:366px;top:792.6px;width:181.3px;height:18px;background:#c8e2fa;overflow:hidden;border-radius:3px 3px 0 0"><svg width="181" height="18" viewBox="0 0 181 18" style="position:absolute;left:0;top:0"><polygon points="0.0,6.9 1.5,4.5 3.0,6.7 4.5,8.3 6.0,6.0 7.5,8.8 9.1,8.8 10.6,8.6 12.1,4.2 13.6,5.9 15.1,10.0 16.6,9.0 18.1,8.3 19.6,9.1 21.1,7.0 22.6,6.6 24.1,6.7 25.6,6.9 27.1,4.1 28.7,4.9 30.2,7.7 31.7,9.6 33.2,5.3 34.7,4.9 36.2,4.3 37.7,9.3 39.2,4.6 40.7,4.2 42.2,8.9 43.7,5.3 45.2,8.8 46.8,4.3 48.3,8.7 49.8,10.1 51.3,5.2 52.8,6.4 54.3,8.3 55.8,8.6 57.3,8.7 58.8,8.2 60.3,4.3 61.8,7.7 63.4,8.2 64.9,4.9 66.4,8.8 67.9,8.2 69.4,5.3 70.9,9.6 72.4,8.8 73.9,8.0 75.4,7.4 76.9,4.3 78.4,6.3 79.9,8.3 81.5,4.6 83.0,8.0 84.5,5.5 86.0,8.3 87.5,4.7 89.0,9.3 90.5,9.1 92.0,8.1 93.5,8.0 95.0,6.2 96.5,8.6 98.0,9.2 99.5,7.2 101.1,7.3 102.6,6.4 104.1,9.9 105.6,10.1 107.1,9.7 108.6,10.1 110.1,9.5 111.6,8.2 113.1,9.2 114.6,11.0 116.1,10.8 117.7,9.9 119.2,11.0 120.7,10.6 122.2,10.9 123.7,11.2 125.2,10.9 126.7,11.1 128.2,11.3 129.7,11.4 131.2,11.5 132.7,11.5 134.2,11.5 135.8,11.5 137.3,11.5 138.8,11.5 140.3,11.5 141.8,11.5 143.3,11.5 144.8,11.5 146.3,11.5 147.8,11.5 149.3,11.5 150.8,11.5 152.3,11.5 153.8,11.5 155.4,11.5 156.9,11.5 158.4,11.5 159.9,11.5 161.4,11.5 162.9,11.5 164.4,11.5 165.9,11.5 167.4,11.5 168.9,11.5 170.4,11.5 171.9,7.2 173.5,5.2 175.0,9.5 176.5,6.3 178.0,8.7 179.5,6.4 181.0,5.3 181.0,17.7 179.5,16.6 178.0,14.3 176.5,16.7 175.0,13.5 173.5,17.8 171.9,15.8 170.4,11.5 168.9,11.5 167.4,11.5 165.9,11.5 164.4,11.5 162.9,11.5 161.4,11.5 159.9,11.5 158.4,11.5 156.9,11.5 155.4,11.5 153.8,11.5 152.3,11.5 150.8,11.5 149.3,11.5 147.8,11.5 146.3,11.5 144.8,11.5 143.3,11.5 141.8,11.5 140.3,11.5 138.8,11.5 137.3,11.5 135.8,11.5 134.2,11.5 132.7,11.5 131.2,11.5 129.7,11.6 128.2,11.7 126.7,11.9 125.2,12.1 123.7,11.8 122.2,12.1 120.7,12.4 119.2,12.0 117.7,13.1 116.1,12.2 114.6,12.0 113.1,13.8 111.6,14.8 110.1,13.5 108.6,12.9 107.1,13.3 105.6,12.9 104.1,13.1 102.6,16.6 101.1,15.7 99.5,15.8 98.0,13.8 96.5,14.4 95.0,16.8 93.5,15.0 92.0,14.9 90.5,13.9 89.0,13.7 87.5,18.3 86.0,14.7 84.5,17.5 83.0,15.0 81.5,18.4 79.9,14.7 78.4,16.7 76.9,18.7 75.4,15.6 73.9,15.0 72.4,14.2 70.9,13.4 69.4,17.7 67.9,14.8 66.4,14.2 64.9,18.1 63.4,14.8 61.8,15.3 60.3,18.7 58.8,14.8 57.3,14.3 55.8,14.4 54.3,14.7 52.8,16.6 51.3,17.8 49.8,12.9 48.3,14.3 46.8,18.7 45.2,14.2 43.7,17.7 42.2,14.1 40.7,18.8 39.2,18.4 37.7,13.7 36.2,18.7 34.7,18.1 33.2,17.7 31.7,13.4 30.2,15.3 28.7,18.1 27.1,18.9 25.6,16.1 24.1,16.3 22.6,16.4 21.1,16.0 19.6,13.9 18.1,14.7 16.6,14.0 15.1,13.0 13.6,17.1 12.1,18.8 10.6,14.4 9.1,14.2 7.5,14.2 6.0,17.0 4.5,14.7 3.0,16.3 1.5,18.5 0.0,16.1" fill="#9ccbf3"/></svg></div>
<svg class="a" style="left:376.7px;top:798.2px;" width="11" height="10" viewBox="0 0 11 10"><path d="M3.6 1.8 L9.6 0.8 V6.6 M3.6 1.8 V7.8" fill="none" stroke="#6f4a9c" stroke-width="1.1"/><ellipse cx="2.3" cy="8" rx="1.7" ry="1.4" fill="none" stroke="#6f4a9c" stroke-width="1"/><ellipse cx="8.3" cy="6.9" rx="1.7" ry="1.4" fill="none" stroke="#6f4a9c" stroke-width="1"/></svg>
<div class="t" style="left:393.30px;top:797.30px;font-size:12px;color:#3a398c;letter-spacing:-0.286px;-webkit-text-stroke:0.22px;">Hello Mr Princeton</div>
<div class="a" style="left:456.5px;top:645px;width:1.9px;height:170px;background:#3b3a8a;"></div>
<svg class="a" style="left:451.5px;top:640.8px;" width="12" height="13" viewBox="0 0 12 13"><path d="M0.5 1.8 a1.3 1.3 0 0 1 1.3 -1.3 H10.2 a1.3 1.3 0 0 1 1.3 1.3 V8.2 L6 12.4 L0.5 8.2 Z" fill="#3b3a8a"/></svg>
</body></html>
